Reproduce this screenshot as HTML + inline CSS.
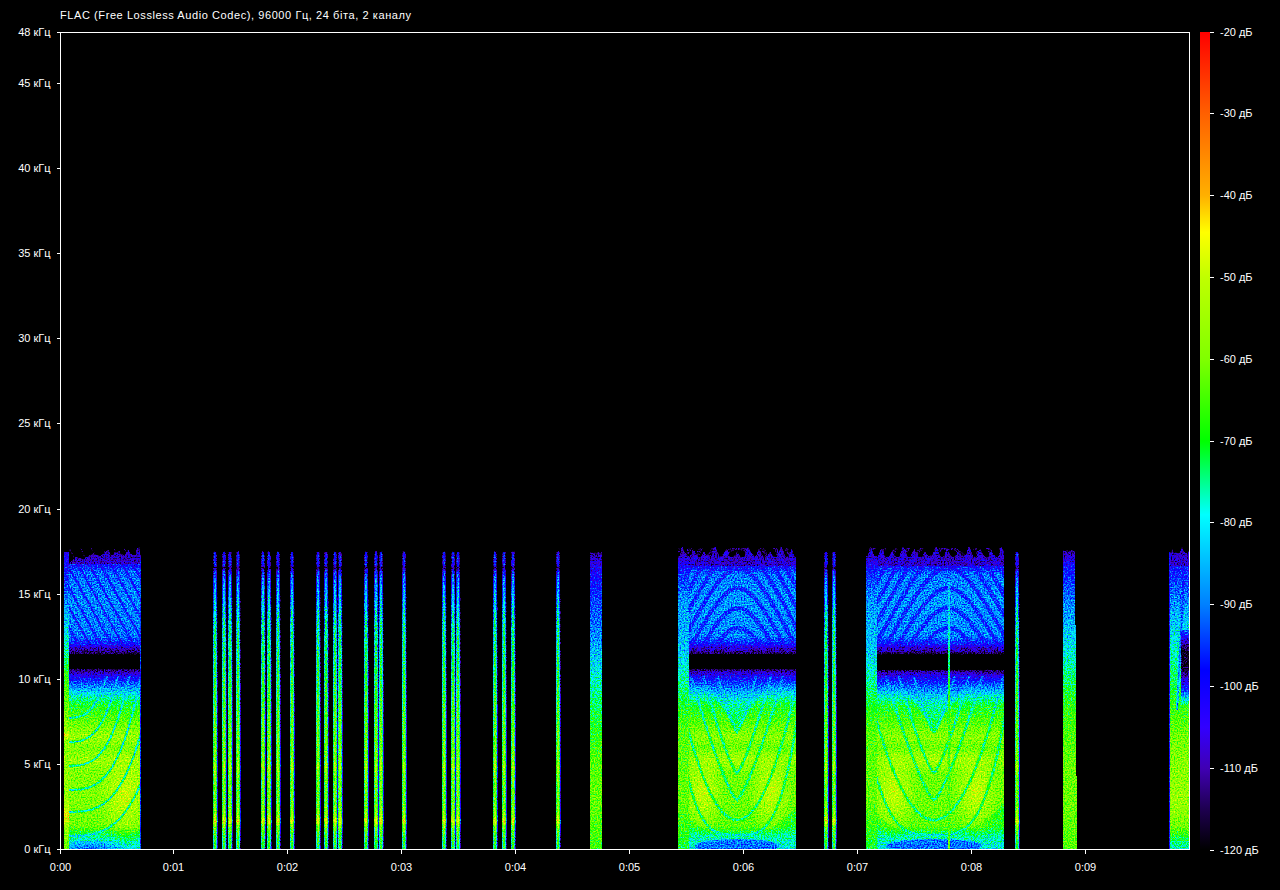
<!DOCTYPE html>
<html><head><meta charset="utf-8"><style>
html,body{margin:0;padding:0;background:#000;width:1280px;height:890px;overflow:hidden}
svg{display:block}
</style></head><body>
<svg width="1280" height="890" viewBox="0 0 1280 890" shape-rendering="crispEdges">
<defs><filter id="spec" filterUnits="userSpaceOnUse" x="61" y="520" width="1128" height="329" color-interpolation-filters="sRGB">
<feTurbulence type="fractalNoise" baseFrequency="0.7" numOctaves="1" seed="5" result="n"/>
<feColorMatrix in="n" type="matrix" values="2 0 0 0 -0.5  2 0 0 0 -0.5  2 0 0 0 -0.5  0 0 0 0 1" result="n2"/>
<feComposite in="SourceGraphic" in2="n2" operator="arithmetic" k1="0" k2="1" k3="0.200" k4="-0.100" result="m"/>
<feComponentTransfer in="m"><feFuncR type="table" tableValues="0.000 0.000 0.000 0.000 0.000 0.000 0.000 0.000 0.000 0.000 0.000 0.000 0.000 0.000 0.000 0.000 0.000 0.000 0.000 0.000 0.000 0.000 0.000 0.000 0.000 0.000 0.000 0.000 0.000 0.000 0.000 0.000 0.000 0.000 0.000 0.000 0.004 0.016 0.024 0.035 0.047 0.059 0.067 0.078 0.090 0.098 0.110 0.122 0.133 0.145 0.157 0.169 0.184 0.196 0.208 0.220 0.231 0.243 0.251 0.243 0.239 0.235 0.227 0.224 0.220 0.216 0.208 0.204 0.200 0.192 0.176 0.165 0.153 0.141 0.125 0.114 0.102 0.090 0.075 0.063 0.051 0.039 0.024 0.012 0.000 0.000 0.000 0.000 0.000 0.000 0.000 0.000 0.000 0.000 0.000 0.000 0.000 0.000 0.000 0.000 0.000 0.000 0.000 0.000 0.000 0.000 0.000 0.000 0.000 0.000 0.000 0.000 0.000 0.000 0.000 0.000 0.000 0.000 0.000 0.000 0.000 0.000 0.000 0.000 0.000 0.000 0.000 0.000 0.000 0.000 0.000 0.000 0.000 0.000 0.000 0.000 0.000 0.000 0.000 0.000 0.000 0.000 0.000 0.000 0.000 0.000 0.016 0.039 0.059 0.082 0.106 0.129 0.153 0.176 0.196 0.220 0.243 0.267 0.290 0.314 0.337 0.357 0.380 0.404 0.427 0.451 0.475 0.494 0.510 0.522 0.533 0.545 0.557 0.569 0.580 0.592 0.600 0.612 0.624 0.635 0.647 0.659 0.671 0.682 0.694 0.706 0.718 0.729 0.737 0.749 0.769 0.788 0.812 0.831 0.851 0.871 0.890 0.914 0.933 0.953 0.973 0.996 1.000 1.000 1.000 1.000 1.000 1.000 1.000 1.000 1.000 1.000 1.000 1.000 1.000 1.000 1.000 1.000 1.000 1.000 1.000 1.000 1.000 1.000 1.000 1.000 1.000 1.000 1.000 1.000 1.000 1.000 1.000 1.000 1.000 1.000 1.000 1.000 1.000 1.000 1.000 1.000 1.000 1.000 1.000 1.000 1.000 1.000 1.000 1.000 1.000 1.000 1.000 1.000 1.000 1.000"/><feFuncG type="table" tableValues="0.000 0.000 0.000 0.000 0.000 0.000 0.000 0.000 0.000 0.000 0.000 0.000 0.000 0.000 0.000 0.000 0.000 0.000 0.000 0.000 0.000 0.000 0.000 0.000 0.000 0.000 0.000 0.000 0.000 0.000 0.000 0.000 0.000 0.000 0.000 0.000 0.000 0.000 0.000 0.000 0.000 0.000 0.000 0.000 0.000 0.000 0.000 0.000 0.000 0.000 0.000 0.000 0.000 0.000 0.000 0.000 0.000 0.000 0.000 0.000 0.000 0.000 0.000 0.000 0.000 0.000 0.000 0.000 0.000 0.000 0.000 0.000 0.000 0.000 0.000 0.000 0.000 0.000 0.000 0.000 0.000 0.000 0.000 0.000 0.000 0.031 0.059 0.086 0.118 0.145 0.173 0.200 0.231 0.259 0.286 0.318 0.345 0.373 0.404 0.431 0.459 0.486 0.514 0.533 0.553 0.573 0.596 0.616 0.635 0.659 0.678 0.698 0.718 0.741 0.761 0.780 0.800 0.824 0.843 0.863 0.882 0.906 0.925 0.945 0.969 0.988 1.000 1.000 1.000 1.000 1.000 1.000 1.000 1.000 1.000 1.000 1.000 1.000 1.000 1.000 1.000 1.000 1.000 1.000 1.000 1.000 1.000 1.000 1.000 1.000 1.000 1.000 1.000 1.000 1.000 1.000 1.000 1.000 1.000 1.000 1.000 1.000 1.000 1.000 1.000 1.000 1.000 1.000 1.000 1.000 1.000 1.000 1.000 1.000 1.000 1.000 1.000 1.000 1.000 1.000 1.000 1.000 1.000 1.000 1.000 1.000 1.000 1.000 1.000 1.000 1.000 1.000 1.000 1.000 1.000 1.000 1.000 1.000 1.000 1.000 1.000 1.000 0.976 0.945 0.914 0.882 0.851 0.820 0.788 0.757 0.725 0.694 0.678 0.663 0.651 0.635 0.620 0.608 0.592 0.576 0.565 0.549 0.533 0.522 0.506 0.490 0.478 0.463 0.447 0.435 0.420 0.408 0.392 0.376 0.361 0.345 0.325 0.310 0.290 0.275 0.259 0.239 0.224 0.208 0.188 0.173 0.153 0.137 0.122 0.102 0.086 0.071 0.051 0.035 0.016 0.000"/><feFuncB type="table" tableValues="0.000 0.000 0.000 0.000 0.000 0.000 0.000 0.000 0.000 0.000 0.000 0.000 0.000 0.000 0.000 0.000 0.000 0.000 0.000 0.000 0.000 0.000 0.000 0.000 0.000 0.000 0.000 0.000 0.000 0.000 0.000 0.000 0.000 0.000 0.000 0.000 0.008 0.035 0.067 0.094 0.122 0.153 0.180 0.208 0.239 0.267 0.294 0.325 0.361 0.396 0.431 0.471 0.506 0.541 0.576 0.612 0.647 0.682 0.718 0.741 0.769 0.796 0.824 0.851 0.878 0.902 0.929 0.957 0.984 1.000 1.000 1.000 1.000 1.000 1.000 1.000 1.000 1.000 1.000 1.000 1.000 1.000 1.000 1.000 1.000 1.000 1.000 1.000 1.000 1.000 1.000 1.000 1.000 1.000 1.000 1.000 1.000 1.000 1.000 1.000 1.000 1.000 1.000 1.000 1.000 1.000 1.000 1.000 1.000 1.000 1.000 1.000 1.000 1.000 1.000 1.000 1.000 1.000 1.000 1.000 1.000 1.000 1.000 1.000 1.000 1.000 0.980 0.929 0.878 0.827 0.776 0.725 0.675 0.627 0.576 0.525 0.475 0.424 0.373 0.322 0.271 0.220 0.169 0.118 0.067 0.020 0.000 0.000 0.000 0.000 0.000 0.000 0.000 0.000 0.000 0.000 0.000 0.000 0.000 0.000 0.000 0.000 0.000 0.000 0.000 0.000 0.000 0.000 0.000 0.000 0.000 0.000 0.000 0.000 0.000 0.000 0.000 0.000 0.000 0.000 0.000 0.000 0.000 0.000 0.000 0.000 0.000 0.000 0.000 0.000 0.000 0.000 0.000 0.000 0.000 0.000 0.000 0.000 0.000 0.000 0.000 0.000 0.000 0.000 0.000 0.000 0.000 0.000 0.000 0.000 0.000 0.000 0.000 0.000 0.000 0.000 0.000 0.000 0.000 0.000 0.000 0.000 0.000 0.000 0.000 0.000 0.000 0.000 0.000 0.000 0.000 0.000 0.000 0.000 0.000 0.000 0.000 0.000 0.000 0.000 0.000 0.000 0.000 0.000 0.000 0.000 0.000 0.000 0.000 0.000 0.000 0.000 0.000 0.000 0.000 0.000"/><feFuncA type="linear" slope="0" intercept="1"/></feComponentTransfer>
</filter>
<linearGradient id="g1" gradientUnits="userSpaceOnUse" x1="0" y1="549" x2="0" y2="849"><stop offset="0.0000" stop-color="#000000"/><stop offset="0.0067" stop-color="#000000"/><stop offset="0.0100" stop-color="#474747"/><stop offset="0.0233" stop-color="#545454"/><stop offset="0.0533" stop-color="#545454"/><stop offset="0.0633" stop-color="#313131"/><stop offset="0.0733" stop-color="#585858"/><stop offset="0.1033" stop-color="#6a6a6a"/><stop offset="0.1700" stop-color="#777777"/><stop offset="0.2533" stop-color="#898989"/><stop offset="0.3700" stop-color="#919191"/><stop offset="0.4700" stop-color="#9a9a9a"/><stop offset="0.5700" stop-color="#a3a3a3"/><stop offset="0.7033" stop-color="#acacac"/><stop offset="0.7267" stop-color="#b9b9b9"/><stop offset="0.7500" stop-color="#acacac"/><stop offset="0.8367" stop-color="#a7a7a7"/><stop offset="0.8900" stop-color="#b4b4b4"/><stop offset="0.9067" stop-color="#cacaca"/><stop offset="0.9233" stop-color="#b0b0b0"/><stop offset="0.9533" stop-color="#9f9f9f"/><stop offset="1.0000" stop-color="#969696"/></linearGradient>
<linearGradient id="g2" gradientUnits="userSpaceOnUse" x1="0" y1="549" x2="0" y2="849"><stop offset="0.0000" stop-color="#000000"/><stop offset="0.0067" stop-color="#000000"/><stop offset="0.0100" stop-color="#282828"/><stop offset="0.0233" stop-color="#353535"/><stop offset="0.0533" stop-color="#353535"/><stop offset="0.0633" stop-color="#242424"/><stop offset="0.0733" stop-color="#3a3a3a"/><stop offset="0.1033" stop-color="#4b4b4b"/><stop offset="0.1700" stop-color="#585858"/><stop offset="0.2533" stop-color="#6a6a6a"/><stop offset="0.3700" stop-color="#737373"/><stop offset="0.4700" stop-color="#7b7b7b"/><stop offset="0.5700" stop-color="#848484"/><stop offset="0.7033" stop-color="#8d8d8d"/><stop offset="0.7267" stop-color="#9a9a9a"/><stop offset="0.7500" stop-color="#8d8d8d"/><stop offset="0.8367" stop-color="#898989"/><stop offset="0.8900" stop-color="#969696"/><stop offset="0.9067" stop-color="#acacac"/><stop offset="0.9233" stop-color="#919191"/><stop offset="0.9533" stop-color="#808080"/><stop offset="1.0000" stop-color="#777777"/></linearGradient>
<linearGradient id="g3" gradientUnits="userSpaceOnUse" x1="0" y1="549" x2="0" y2="849"><stop offset="0.0000" stop-color="#000000"/><stop offset="0.0067" stop-color="#000000"/><stop offset="0.0100" stop-color="#000000"/><stop offset="0.0233" stop-color="#000000"/><stop offset="0.0533" stop-color="#000000"/><stop offset="0.0633" stop-color="#000000"/><stop offset="0.0733" stop-color="#000000"/><stop offset="0.1033" stop-color="#000000"/><stop offset="0.1700" stop-color="#242424"/><stop offset="0.2533" stop-color="#242424"/><stop offset="0.3700" stop-color="#2c2c2c"/><stop offset="0.4700" stop-color="#353535"/><stop offset="0.5700" stop-color="#3e3e3e"/><stop offset="0.7033" stop-color="#474747"/><stop offset="0.7267" stop-color="#545454"/><stop offset="0.7500" stop-color="#474747"/><stop offset="0.8367" stop-color="#424242"/><stop offset="0.8900" stop-color="#505050"/><stop offset="0.9067" stop-color="#656565"/><stop offset="0.9233" stop-color="#4b4b4b"/><stop offset="0.9533" stop-color="#3a3a3a"/><stop offset="1.0000" stop-color="#313131"/></linearGradient>
<linearGradient id="g4" gradientUnits="userSpaceOnUse" x1="0" y1="554" x2="0" y2="849"><stop offset="0.0000" stop-color="#000000"/><stop offset="0.0034" stop-color="#3a3a3a"/><stop offset="0.0271" stop-color="#4b4b4b"/><stop offset="0.0610" stop-color="#636363"/><stop offset="0.1559" stop-color="#686868"/><stop offset="0.2780" stop-color="#656565"/><stop offset="0.3051" stop-color="#545454"/><stop offset="0.3186" stop-color="#3c3c3c"/><stop offset="0.3390" stop-color="#2c2c2c"/><stop offset="0.3424" stop-color="#000000"/><stop offset="0.3864" stop-color="#000000"/><stop offset="0.3898" stop-color="#2c2c2c"/><stop offset="0.4068" stop-color="#424242"/><stop offset="0.4407" stop-color="#616161"/><stop offset="0.4746" stop-color="#7b7b7b"/><stop offset="0.5085" stop-color="#919191"/><stop offset="0.5695" stop-color="#a3a3a3"/><stop offset="0.6203" stop-color="#b0b0b0"/><stop offset="0.6576" stop-color="#a7a7a7"/><stop offset="0.6983" stop-color="#b0b0b0"/><stop offset="0.7390" stop-color="#a9a9a9"/><stop offset="0.8339" stop-color="#a9a9a9"/><stop offset="0.9220" stop-color="#a5a5a5"/><stop offset="0.9559" stop-color="#898989"/><stop offset="1.0000" stop-color="#7b7b7b"/></linearGradient>
<clipPath id="c1"><rect x="69" y="676" width="72" height="173"/></clipPath>
<radialGradient id="rg5"><stop offset="0" stop-color="#c2c2c2" stop-opacity="0.8"/><stop offset="1" stop-color="#c2c2c2" stop-opacity="0"/></radialGradient>
<clipPath id="c2"><rect x="69" y="548" width="72" height="102"/></clipPath>
<clipPath id="c3"><rect x="69" y="676" width="72" height="173"/></clipPath>
<radialGradient id="rg6"><stop offset="0" stop-color="#545454" stop-opacity="0.7"/><stop offset="1" stop-color="#545454" stop-opacity="0"/></radialGradient>
<linearGradient id="g7" gradientUnits="userSpaceOnUse" x1="0" y1="556" x2="0" y2="849"><stop offset="0.0000" stop-color="#000000"/><stop offset="0.0034" stop-color="#3a3a3a"/><stop offset="0.0273" stop-color="#4b4b4b"/><stop offset="0.0614" stop-color="#656565"/><stop offset="0.1502" stop-color="#6a6a6a"/><stop offset="0.2730" stop-color="#686868"/><stop offset="0.3003" stop-color="#545454"/><stop offset="0.3140" stop-color="#3c3c3c"/><stop offset="0.3345" stop-color="#2c2c2c"/><stop offset="0.3379" stop-color="#000000"/><stop offset="0.3823" stop-color="#000000"/><stop offset="0.3857" stop-color="#2c2c2c"/><stop offset="0.4027" stop-color="#424242"/><stop offset="0.4369" stop-color="#616161"/><stop offset="0.4710" stop-color="#7b7b7b"/><stop offset="0.5051" stop-color="#919191"/><stop offset="0.5666" stop-color="#9f9f9f"/><stop offset="0.6177" stop-color="#acacac"/><stop offset="0.6553" stop-color="#a3a3a3"/><stop offset="0.6962" stop-color="#acacac"/><stop offset="0.7372" stop-color="#a5a5a5"/><stop offset="0.8328" stop-color="#a5a5a5"/><stop offset="0.9215" stop-color="#a1a1a1"/><stop offset="0.9556" stop-color="#898989"/><stop offset="1.0000" stop-color="#7b7b7b"/></linearGradient>
<clipPath id="c4"><rect x="678" y="548" width="118" height="104"/></clipPath>
<clipPath id="c5"><rect x="678" y="676" width="118" height="173"/></clipPath>
<radialGradient id="rg8"><stop offset="0" stop-color="#c2c2c2" stop-opacity="0.8"/><stop offset="1" stop-color="#c2c2c2" stop-opacity="0"/></radialGradient>
<radialGradient id="rg9"><stop offset="0" stop-color="#c2c2c2" stop-opacity="0.8"/><stop offset="1" stop-color="#c2c2c2" stop-opacity="0"/></radialGradient>
<radialGradient id="rg10"><stop offset="0" stop-color="#b9b9b9" stop-opacity="0.6"/><stop offset="1" stop-color="#b9b9b9" stop-opacity="0"/></radialGradient>
<linearGradient id="g11" gradientUnits="userSpaceOnUse" x1="0" y1="556" x2="0" y2="849"><stop offset="0.0000" stop-color="#000000"/><stop offset="0.0034" stop-color="#3a3a3a"/><stop offset="0.0273" stop-color="#4b4b4b"/><stop offset="0.0614" stop-color="#656565"/><stop offset="0.1502" stop-color="#6a6a6a"/><stop offset="0.2730" stop-color="#686868"/><stop offset="0.3003" stop-color="#545454"/><stop offset="0.3140" stop-color="#3c3c3c"/><stop offset="0.3345" stop-color="#2c2c2c"/><stop offset="0.3379" stop-color="#000000"/><stop offset="0.3857" stop-color="#000000"/><stop offset="0.3891" stop-color="#2c2c2c"/><stop offset="0.4061" stop-color="#424242"/><stop offset="0.4403" stop-color="#616161"/><stop offset="0.4744" stop-color="#7b7b7b"/><stop offset="0.5085" stop-color="#919191"/><stop offset="0.5666" stop-color="#9f9f9f"/><stop offset="0.6177" stop-color="#acacac"/><stop offset="0.6553" stop-color="#a3a3a3"/><stop offset="0.6962" stop-color="#acacac"/><stop offset="0.7372" stop-color="#a5a5a5"/><stop offset="0.8328" stop-color="#a5a5a5"/><stop offset="0.9215" stop-color="#a1a1a1"/><stop offset="0.9556" stop-color="#898989"/><stop offset="1.0000" stop-color="#7b7b7b"/></linearGradient>
<clipPath id="c6"><rect x="866" y="548" width="138" height="104"/></clipPath>
<clipPath id="c7"><rect x="866" y="676" width="138" height="173"/></clipPath>
<radialGradient id="rg12"><stop offset="0" stop-color="#c2c2c2" stop-opacity="0.8"/><stop offset="1" stop-color="#c2c2c2" stop-opacity="0"/></radialGradient>
<radialGradient id="rg13"><stop offset="0" stop-color="#c2c2c2" stop-opacity="0.8"/><stop offset="1" stop-color="#c2c2c2" stop-opacity="0"/></radialGradient>
<radialGradient id="rg14"><stop offset="0" stop-color="#b9b9b9" stop-opacity="0.6"/><stop offset="1" stop-color="#b9b9b9" stop-opacity="0"/></radialGradient>
<linearGradient id="g15" gradientUnits="userSpaceOnUse" x1="0" y1="552" x2="0" y2="849"><stop offset="0.0000" stop-color="#000000"/><stop offset="0.0034" stop-color="#3e3e3e"/><stop offset="0.0438" stop-color="#505050"/><stop offset="0.1279" stop-color="#616161"/><stop offset="0.2290" stop-color="#737373"/><stop offset="0.3636" stop-color="#848484"/><stop offset="0.4983" stop-color="#969696"/><stop offset="0.6330" stop-color="#a7a7a7"/><stop offset="0.8350" stop-color="#b0b0b0"/><stop offset="0.9226" stop-color="#a7a7a7"/><stop offset="0.9697" stop-color="#8d8d8d"/><stop offset="1.0000" stop-color="#808080"/></linearGradient>
<linearGradient id="g16" gradientUnits="userSpaceOnUse" x1="0" y1="625" x2="0" y2="705"><stop offset="0.0000" stop-color="#6e6e6e"/><stop offset="0.1375" stop-color="#505050"/><stop offset="0.2500" stop-color="#353535"/><stop offset="0.3375" stop-color="#262626"/><stop offset="0.5375" stop-color="#262626"/><stop offset="0.6375" stop-color="#3a3a3a"/><stop offset="0.8125" stop-color="#585858"/><stop offset="1.0000" stop-color="#8d8d8d"/></linearGradient>
<linearGradient id="g17" gradientUnits="userSpaceOnUse" x1="0" y1="551" x2="0" y2="849"><stop offset="0.0000" stop-color="#000000"/><stop offset="0.0067" stop-color="#353535"/><stop offset="0.0638" stop-color="#4b4b4b"/><stop offset="0.1644" stop-color="#5b5b5b"/><stop offset="0.2987" stop-color="#6a6a6a"/><stop offset="0.4329" stop-color="#808080"/><stop offset="0.5671" stop-color="#919191"/><stop offset="0.7013" stop-color="#9f9f9f"/><stop offset="0.8356" stop-color="#a3a3a3"/><stop offset="1.0000" stop-color="#9a9a9a"/></linearGradient>
<linearGradient id="g18" gradientUnits="userSpaceOnUse" x1="0" y1="549" x2="0" y2="849"><stop offset="0.0000" stop-color="#000000"/><stop offset="0.0067" stop-color="#353535"/><stop offset="0.0567" stop-color="#505050"/><stop offset="0.1700" stop-color="#656565"/><stop offset="0.3700" stop-color="#808080"/><stop offset="0.5033" stop-color="#969696"/><stop offset="0.7033" stop-color="#a3a3a3"/><stop offset="0.8367" stop-color="#a5a5a5"/><stop offset="1.0000" stop-color="#9f9f9f"/></linearGradient>
<linearGradient id="g19" gradientUnits="userSpaceOnUse" x1="0" y1="549" x2="0" y2="849"><stop offset="0.0000" stop-color="#000000"/><stop offset="0.0067" stop-color="#3e3e3e"/><stop offset="0.0700" stop-color="#545454"/><stop offset="0.1700" stop-color="#6a6a6a"/><stop offset="0.3367" stop-color="#7b7b7b"/><stop offset="0.4367" stop-color="#919191"/><stop offset="0.6033" stop-color="#a3a3a3"/><stop offset="0.8367" stop-color="#a7a7a7"/><stop offset="1.0000" stop-color="#9a9a9a"/></linearGradient>
<linearGradient id="g20" gradientUnits="userSpaceOnUse" x1="0" y1="551" x2="0" y2="849"><stop offset="0.0000" stop-color="#000000"/><stop offset="0.0034" stop-color="#474747"/><stop offset="0.0805" stop-color="#545454"/><stop offset="0.1980" stop-color="#6e6e6e"/><stop offset="0.3322" stop-color="#848484"/><stop offset="0.4329" stop-color="#9a9a9a"/><stop offset="0.6007" stop-color="#acacac"/><stop offset="0.6174" stop-color="#c6c6c6"/><stop offset="0.6342" stop-color="#acacac"/><stop offset="0.8356" stop-color="#b0b0b0"/><stop offset="0.8960" stop-color="#cacaca"/><stop offset="0.9161" stop-color="#b0b0b0"/><stop offset="1.0000" stop-color="#a3a3a3"/></linearGradient>
<linearGradient id="g21" gradientUnits="userSpaceOnUse" x1="0" y1="549" x2="0" y2="849"><stop offset="0.0000" stop-color="#000000"/><stop offset="0.0233" stop-color="#3e3e3e"/><stop offset="0.0867" stop-color="#585858"/><stop offset="0.1700" stop-color="#6a6a6a"/><stop offset="0.3367" stop-color="#737373"/><stop offset="0.4367" stop-color="#848484"/><stop offset="0.6033" stop-color="#9f9f9f"/><stop offset="0.8367" stop-color="#a3a3a3"/><stop offset="1.0000" stop-color="#919191"/></linearGradient>
<linearGradient id="g22" gradientUnits="userSpaceOnUse" x1="0" y1="577" x2="0" y2="849"><stop offset="0.0000" stop-color="#000000"/><stop offset="0.0037" stop-color="#6e6e6e"/><stop offset="0.0846" stop-color="#777777"/><stop offset="0.2684" stop-color="#848484"/><stop offset="0.4522" stop-color="#969696"/><stop offset="1.0000" stop-color="#9f9f9f"/></linearGradient>
<linearGradient id="cbar" x1="0" y1="0" x2="0" y2="1"><stop offset="0.0000" stop-color="#ff0000"/><stop offset="0.1000" stop-color="#ff6000"/><stop offset="0.2000" stop-color="#ffb000"/><stop offset="0.2450" stop-color="#ffff00"/><stop offset="0.3000" stop-color="#c0ff00"/><stop offset="0.4000" stop-color="#80ff00"/><stop offset="0.5000" stop-color="#00ff00"/><stop offset="0.5900" stop-color="#00ffff"/><stop offset="0.7000" stop-color="#0080ff"/><stop offset="0.7800" stop-color="#0000ff"/><stop offset="0.8500" stop-color="#3200ff"/><stop offset="0.9000" stop-color="#4000b4"/><stop offset="0.9500" stop-color="#1e0050"/><stop offset="1.0000" stop-color="#000000"/></linearGradient></defs>
<rect width="1280" height="890" fill="#000"/>
<g filter="url(#spec)"><rect x="61" y="520" width="1128" height="329" fill="#000"/>
<rect x="213" y="549" width="4" height="300" fill="url(#g2)"/>
<rect x="214" y="549" width="2" height="300" fill="url(#g1)"/>
<rect x="217" y="549" width="1" height="300" fill="url(#g3)"/>
<rect x="222" y="549" width="4" height="300" fill="url(#g2)"/>
<rect x="223" y="549" width="2" height="300" fill="url(#g1)"/>
<rect x="226" y="549" width="1" height="300" fill="url(#g3)"/>
<rect x="228" y="549" width="4" height="300" fill="url(#g2)"/>
<rect x="229" y="549" width="2" height="300" fill="url(#g1)"/>
<rect x="232" y="549" width="1" height="300" fill="url(#g3)"/>
<rect x="236" y="549" width="4" height="300" fill="url(#g2)"/>
<rect x="237" y="549" width="2" height="300" fill="url(#g1)"/>
<rect x="240" y="549" width="1" height="300" fill="url(#g3)"/>
<rect x="261" y="549" width="4" height="300" fill="url(#g2)"/>
<rect x="262" y="549" width="2" height="300" fill="url(#g1)"/>
<rect x="265" y="549" width="1" height="300" fill="url(#g3)"/>
<rect x="267" y="549" width="4" height="300" fill="url(#g2)"/>
<rect x="268" y="549" width="2" height="300" fill="url(#g1)"/>
<rect x="271" y="549" width="1" height="300" fill="url(#g3)"/>
<rect x="276" y="549" width="4" height="300" fill="url(#g2)"/>
<rect x="277" y="549" width="2" height="300" fill="url(#g1)"/>
<rect x="280" y="549" width="1" height="300" fill="url(#g3)"/>
<rect x="290" y="549" width="4" height="300" fill="url(#g2)"/>
<rect x="291" y="549" width="2" height="300" fill="url(#g1)"/>
<rect x="294" y="549" width="1" height="300" fill="url(#g3)"/>
<rect x="316" y="549" width="4" height="300" fill="url(#g2)"/>
<rect x="317" y="549" width="2" height="300" fill="url(#g1)"/>
<rect x="320" y="549" width="1" height="300" fill="url(#g3)"/>
<rect x="324" y="549" width="4" height="300" fill="url(#g2)"/>
<rect x="325" y="549" width="2" height="300" fill="url(#g1)"/>
<rect x="328" y="549" width="1" height="300" fill="url(#g3)"/>
<rect x="333" y="549" width="4" height="300" fill="url(#g2)"/>
<rect x="334" y="549" width="2" height="300" fill="url(#g1)"/>
<rect x="337" y="549" width="1" height="300" fill="url(#g3)"/>
<rect x="338" y="549" width="4" height="300" fill="url(#g2)"/>
<rect x="339" y="549" width="2" height="300" fill="url(#g1)"/>
<rect x="342" y="549" width="1" height="300" fill="url(#g3)"/>
<rect x="364" y="549" width="4" height="300" fill="url(#g2)"/>
<rect x="365" y="549" width="2" height="300" fill="url(#g1)"/>
<rect x="368" y="549" width="1" height="300" fill="url(#g3)"/>
<rect x="374" y="549" width="4" height="300" fill="url(#g2)"/>
<rect x="375" y="549" width="2" height="300" fill="url(#g1)"/>
<rect x="378" y="549" width="1" height="300" fill="url(#g3)"/>
<rect x="379" y="549" width="4" height="300" fill="url(#g2)"/>
<rect x="380" y="549" width="2" height="300" fill="url(#g1)"/>
<rect x="383" y="549" width="1" height="300" fill="url(#g3)"/>
<rect x="402" y="549" width="4" height="300" fill="url(#g2)"/>
<rect x="403" y="549" width="2" height="300" fill="url(#g1)"/>
<rect x="406" y="549" width="1" height="300" fill="url(#g3)"/>
<rect x="442" y="549" width="4" height="300" fill="url(#g2)"/>
<rect x="443" y="549" width="2" height="300" fill="url(#g1)"/>
<rect x="446" y="549" width="1" height="300" fill="url(#g3)"/>
<rect x="451" y="549" width="4" height="300" fill="url(#g2)"/>
<rect x="452" y="549" width="2" height="300" fill="url(#g1)"/>
<rect x="455" y="549" width="1" height="300" fill="url(#g3)"/>
<rect x="456" y="549" width="4" height="300" fill="url(#g2)"/>
<rect x="457" y="549" width="2" height="300" fill="url(#g1)"/>
<rect x="460" y="549" width="1" height="300" fill="url(#g3)"/>
<rect x="493" y="549" width="4" height="300" fill="url(#g2)"/>
<rect x="494" y="549" width="2" height="300" fill="url(#g1)"/>
<rect x="497" y="549" width="1" height="300" fill="url(#g3)"/>
<rect x="502" y="549" width="4" height="300" fill="url(#g2)"/>
<rect x="503" y="549" width="2" height="300" fill="url(#g1)"/>
<rect x="506" y="549" width="1" height="300" fill="url(#g3)"/>
<rect x="511" y="549" width="4" height="300" fill="url(#g2)"/>
<rect x="512" y="549" width="2" height="300" fill="url(#g1)"/>
<rect x="515" y="549" width="1" height="300" fill="url(#g3)"/>
<rect x="556" y="549" width="4" height="300" fill="url(#g2)"/>
<rect x="557" y="549" width="2" height="300" fill="url(#g1)"/>
<rect x="560" y="549" width="1" height="300" fill="url(#g3)"/>
<rect x="824" y="549" width="4" height="300" fill="url(#g2)"/>
<rect x="825" y="549" width="2" height="300" fill="url(#g1)"/>
<rect x="828" y="549" width="1" height="300" fill="url(#g3)"/>
<rect x="832" y="549" width="4" height="300" fill="url(#g2)"/>
<rect x="833" y="549" width="2" height="300" fill="url(#g1)"/>
<rect x="836" y="549" width="1" height="300" fill="url(#g3)"/>
<rect x="1015" y="549" width="4" height="300" fill="url(#g2)"/>
<rect x="1016" y="549" width="2" height="300" fill="url(#g1)"/>
<rect x="1019" y="549" width="1" height="300" fill="url(#g3)"/>
<rect x="69" y="554" width="72" height="295" fill="url(#g4)"/>
<path d="M69.0 564.0 L73.0 543.0 L79.0 558.0 L84.0 546.0 L90.0 558.0 L95.0 549.0 L101.0 558.0 L106.0 543.0 L112.0 558.0 L117.0 546.0 L123.0 558.0 L128.0 549.0 L134.0 558.0 L139.0 543.0 L141.0 558.0 L141.0 564.0 Z" fill="#3c3c3c" shape-rendering="auto"/>
<path d="M69 540 L141 540 L141 546 L130 551 L124 547 L116 553 L108 550 L100 556 L92 553 L84 559 L76 557 L69 563 Z" fill="#000" shape-rendering="auto"/>
<g clip-path="url(#c1)">
<ellipse cx="125" cy="795" rx="26" ry="50" fill="url(#rg5)" shape-rendering="auto"/>
</g>
<g clip-path="url(#c2)" fill="none" stroke="#424242" stroke-width="2" stroke-opacity="0.6" shape-rendering="auto">
<path d="M3.0 548.0 L63.0 656.0"/>
<path d="M14.0 548.0 L74.0 656.0"/>
<path d="M25.0 548.0 L85.0 656.0"/>
<path d="M36.0 548.0 L96.0 656.0"/>
<path d="M47.0 548.0 L107.0 656.0"/>
<path d="M58.0 548.0 L118.0 656.0"/>
<path d="M69.0 548.0 L129.0 656.0"/>
<path d="M80.0 548.0 L140.0 656.0"/>
<path d="M91.0 548.0 L151.0 656.0"/>
<path d="M102.0 548.0 L162.0 656.0"/>
<path d="M113.0 548.0 L173.0 656.0"/>
<path d="M124.0 548.0 L184.0 656.0"/>
<path d="M135.0 548.0 L195.0 656.0"/>
<path d="M146.0 548.0 L206.0 656.0"/>
<path d="M157.0 548.0 L217.0 656.0"/>
<path d="M168.0 548.0 L228.0 656.0"/>
</g>
<g clip-path="url(#c1)">
<ellipse cx="90" cy="849" rx="40" ry="12" fill="url(#rg6)" shape-rendering="auto"/>
</g>
<g clip-path="url(#c3)" fill="none" stroke="#737373" stroke-width="2" stroke-opacity="0.8" shape-rendering="auto">
<path d="M67.0 836.0 L68.0 836.0 L69.0 836.0 L70.0 836.0 L71.0 836.0 L72.0 836.0 L73.0 835.9 L74.0 835.9 L75.0 835.9 L76.0 835.9 L77.0 835.8 L78.0 835.8 L79.0 835.8 L80.0 835.7 L81.0 835.6 L82.0 835.6 L83.0 835.5 L84.0 835.4 L85.0 835.3 L86.0 835.2 L87.0 835.1 L88.0 834.9 L89.0 834.8 L90.0 834.6 L91.0 834.4 L92.0 834.2 L93.0 834.0 L94.0 833.8 L95.0 833.5 L96.0 833.2 L97.0 833.0 L98.0 832.6 L99.0 832.3 L100.0 831.9 L101.0 831.6 L102.0 831.1 L103.0 830.7 L104.0 830.2 L105.0 829.7 L106.0 829.2 L107.0 828.7 L108.0 828.1 L109.0 827.5 L110.0 826.8 L111.0 826.1 L112.0 825.4 L113.0 824.6 L114.0 823.8 L115.0 823.0 L116.0 822.1 L117.0 821.2 L118.0 820.2 L119.0 819.2 L120.0 818.2 L121.0 817.1 L122.0 815.9 L123.0 814.7 L124.0 813.5 L125.0 812.2 L126.0 810.8 L127.0 809.4 L128.0 808.0 L129.0 806.5 L130.0 804.9 L131.0 803.3 L132.0 801.6 L133.0 799.8 L134.0 798.0 L135.0 796.1 L136.0 794.2 L137.0 792.2 L138.0 790.1 L139.0 787.9 L140.0 785.7 L141.0 783.4 L142.0 781.0 L143.0 778.6"/>
<path d="M67.0 812.0 L68.0 812.0 L69.0 812.0 L70.0 812.0 L71.0 812.0 L72.0 811.9 L73.0 811.9 L74.0 811.9 L75.0 811.9 L76.0 811.8 L77.0 811.8 L78.0 811.7 L79.0 811.6 L80.0 811.6 L81.0 811.5 L82.0 811.4 L83.0 811.2 L84.0 811.1 L85.0 810.9 L86.0 810.8 L87.0 810.6 L88.0 810.4 L89.0 810.2 L90.0 809.9 L91.0 809.6 L92.0 809.3 L93.0 809.0 L94.0 808.7 L95.0 808.3 L96.0 807.9 L97.0 807.4 L98.0 807.0 L99.0 806.5 L100.0 805.9 L101.0 805.3 L102.0 804.7 L103.0 804.1 L104.0 803.4 L105.0 802.6 L106.0 801.8 L107.0 801.0 L108.0 800.1 L109.0 799.2 L110.0 798.2 L111.0 797.2 L112.0 796.1 L113.0 794.9 L114.0 793.7 L115.0 792.5 L116.0 791.2 L117.0 789.8 L118.0 788.3 L119.0 786.8 L120.0 785.3 L121.0 783.6 L122.0 781.9 L123.0 780.1 L124.0 778.2 L125.0 776.3 L126.0 774.3 L127.0 772.1 L128.0 770.0 L129.0 767.7 L130.0 765.3 L131.0 762.9 L132.0 760.3 L133.0 757.7 L134.0 755.0 L135.0 752.2 L136.0 749.3 L137.0 746.2 L138.0 743.1 L139.0 739.9 L140.0 736.6 L141.0 733.1 L142.0 729.6 L143.0 725.9"/>
<path d="M67.0 790.0 L68.0 790.0 L69.0 790.0 L70.0 790.0 L71.0 789.9 L72.0 789.9 L73.0 789.9 L74.0 789.8 L75.0 789.8 L76.0 789.7 L77.0 789.7 L78.0 789.6 L79.0 789.5 L80.0 789.4 L81.0 789.2 L82.0 789.1 L83.0 788.9 L84.0 788.7 L85.0 788.5 L86.0 788.2 L87.0 788.0 L88.0 787.7 L89.0 787.3 L90.0 787.0 L91.0 786.6 L92.0 786.2 L93.0 785.7 L94.0 785.2 L95.0 784.6 L96.0 784.0 L97.0 783.4 L98.0 782.7 L99.0 782.0 L100.0 781.2 L101.0 780.4 L102.0 779.5 L103.0 778.5 L104.0 777.5 L105.0 776.4 L106.0 775.3 L107.0 774.1 L108.0 772.8 L109.0 771.5 L110.0 770.1 L111.0 768.6 L112.0 767.0 L113.0 765.4 L114.0 763.6 L115.0 761.8 L116.0 759.9 L117.0 757.9 L118.0 755.8 L119.0 753.6 L120.0 751.4 L121.0 749.0 L122.0 746.5 L123.0 743.9 L124.0 741.2 L125.0 738.4 L126.0 735.5 L127.0 732.4 L128.0 729.3 L129.0 726.0 L130.0 722.6 L131.0 719.1 L132.0 715.4 L133.0 711.6 L134.0 707.7 L135.0 703.6 L136.0 699.4 L137.0 695.0 L138.0 690.5 L139.0 685.8 L140.0 681.0 L141.0 676.1 L142.0 670.9 L143.0 665.6"/>
<path d="M67.0 766.0 L68.0 766.0 L69.0 766.0 L70.0 765.9 L71.0 765.9 L72.0 765.9 L73.0 765.8 L74.0 765.8 L75.0 765.7 L76.0 765.6 L77.0 765.5 L78.0 765.4 L79.0 765.3 L80.0 765.1 L81.0 764.9 L82.0 764.7 L83.0 764.5 L84.0 764.2 L85.0 763.9 L86.0 763.6 L87.0 763.2 L88.0 762.8 L89.0 762.3 L90.0 761.8 L91.0 761.3 L92.0 760.7 L93.0 760.0 L94.0 759.3 L95.0 758.6 L96.0 757.7 L97.0 756.9 L98.0 755.9 L99.0 754.9 L100.0 753.8 L101.0 752.7 L102.0 751.4 L103.0 750.1 L104.0 748.7 L105.0 747.2 L106.0 745.7 L107.0 744.0 L108.0 742.2 L109.0 740.4 L110.0 738.4 L111.0 736.4 L112.0 734.2 L113.0 731.9 L114.0 729.5 L115.0 727.0 L116.0 724.3 L117.0 721.6 L118.0 718.7 L119.0 715.7 L120.0 712.5 L121.0 709.2 L122.0 705.8 L123.0 702.2 L124.0 698.4 L125.0 694.6 L126.0 690.5 L127.0 686.3 L128.0 681.9 L129.0 677.4 L130.0 672.7 L131.0 667.8 L132.0 662.7 L133.0 657.4 L134.0 652.0 L135.0 646.3 L136.0 640.5 L137.0 634.5 L138.0 628.2 L139.0 621.8 L140.0 615.1 L141.0 608.2 L142.0 601.1 L143.0 593.8"/>
<path d="M67.0 742.0 L68.0 742.0 L69.0 742.0 L70.0 741.9 L71.0 741.9 L72.0 741.8 L73.0 741.8 L74.0 741.7 L75.0 741.6 L76.0 741.5 L77.0 741.3 L78.0 741.2 L79.0 741.0 L80.0 740.8 L81.0 740.5 L82.0 740.2 L83.0 739.9 L84.0 739.5 L85.0 739.1 L86.0 738.6 L87.0 738.1 L88.0 737.5 L89.0 736.9 L90.0 736.2 L91.0 735.4 L92.0 734.6 L93.0 733.7 L94.0 732.7 L95.0 731.7 L96.0 730.5 L97.0 729.3 L98.0 728.0 L99.0 726.6 L100.0 725.1 L101.0 723.5 L102.0 721.8 L103.0 719.9 L104.0 718.0 L105.0 715.9 L106.0 713.7 L107.0 711.4 L108.0 709.0 L109.0 706.4 L110.0 703.7 L111.0 700.8 L112.0 697.8 L113.0 694.6 L114.0 691.3 L115.0 687.8 L116.0 684.1 L117.0 680.3 L118.0 676.3 L119.0 672.1 L120.0 667.7 L121.0 663.1 L122.0 658.3 L123.0 653.4 L124.0 648.2 L125.0 642.8 L126.0 637.1 L127.0 631.3 L128.0 625.2 L129.0 618.9 L130.0 612.4 L131.0 605.6 L132.0 598.5 L133.0 591.2 L134.0 583.6 L135.0 575.8 L136.0 567.7 L137.0 559.3 L138.0 550.7 L139.0 541.7 L140.0 532.4 L141.0 522.9 L142.0 513.0 L143.0 502.9"/>
<path d="M67.0 718.0 L68.0 718.0 L69.0 717.9 L70.0 717.9 L71.0 717.8 L72.0 717.8 L73.0 717.7 L74.0 717.6 L75.0 717.4 L76.0 717.3 L77.0 717.1 L78.0 716.9 L79.0 716.6 L80.0 716.3 L81.0 715.9 L82.0 715.5 L83.0 715.0 L84.0 714.5 L85.0 713.9 L86.0 713.3 L87.0 712.5 L88.0 711.7 L89.0 710.8 L90.0 709.9 L91.0 708.8 L92.0 707.6 L93.0 706.4 L94.0 705.0 L95.0 703.5 L96.0 702.0 L97.0 700.2 L98.0 698.4 L99.0 696.4 L100.0 694.3 L101.0 692.1 L102.0 689.7 L103.0 687.1 L104.0 684.4 L105.0 681.5 L106.0 678.4 L107.0 675.2 L108.0 671.8 L109.0 668.2 L110.0 664.4 L111.0 660.4 L112.0 656.1 L113.0 651.7 L114.0 647.0 L115.0 642.1 L116.0 637.0 L117.0 631.6 L118.0 626.0 L119.0 620.1 L120.0 614.0 L121.0 607.6 L122.0 600.9 L123.0 593.9 L124.0 586.6 L125.0 579.1 L126.0 571.2 L127.0 563.0 L128.0 554.5 L129.0 545.7 L130.0 536.5 L131.0 527.0 L132.0 517.1 L133.0 506.9 L134.0 496.3 L135.0 485.3 L136.0 474.0 L137.0 462.3 L138.0 450.1 L139.0 437.6 L140.0 424.6 L141.0 411.2 L142.0 397.4 L143.0 383.2"/>
</g>
<rect x="678" y="556" width="118" height="293" fill="url(#g7)"/>
<path d="M678.0 566.0 L682.0 545.0 L688.0 560.0 L693.0 548.0 L699.0 560.0 L704.0 551.0 L710.0 560.0 L715.0 545.0 L721.0 560.0 L726.0 548.0 L732.0 560.0 L737.0 551.0 L743.0 560.0 L748.0 545.0 L754.0 560.0 L759.0 548.0 L765.0 560.0 L770.0 551.0 L776.0 560.0 L781.0 545.0 L787.0 560.0 L792.0 548.0 L796.0 560.0 L796.0 566.0 Z" fill="#3c3c3c" shape-rendering="auto"/>
<g clip-path="url(#c4)" fill="none" stroke="#4b4b4b" stroke-width="4" stroke-opacity="0.6" shape-rendering="auto">
<path d="M676.0 534.6 L678.0 530.7 L680.0 526.9 L682.0 523.1 L684.0 519.3 L686.0 515.5 L688.0 511.7 L690.0 508.0 L692.0 504.4 L694.0 500.7 L696.0 497.1 L698.0 493.6 L700.0 490.1 L702.0 486.7 L704.0 483.3 L706.0 480.0 L708.0 476.8 L710.0 473.6 L712.0 470.6 L714.0 467.7 L716.0 464.9 L718.0 462.3 L720.0 459.8 L722.0 457.5 L724.0 455.4 L726.0 453.5 L728.0 451.9 L730.0 450.5 L732.0 449.4 L734.0 448.6 L736.0 448.2 L738.0 448.0 L740.0 448.2 L742.0 448.6 L744.0 449.4 L746.0 450.5 L748.0 451.9 L750.0 453.5 L752.0 455.4 L754.0 457.5 L756.0 459.8 L758.0 462.3 L760.0 464.9 L762.0 467.7 L764.0 470.6 L766.0 473.6 L768.0 476.8 L770.0 480.0 L772.0 483.3 L774.0 486.7 L776.0 490.1 L778.0 493.6 L780.0 497.1 L782.0 500.7 L784.0 504.4 L786.0 508.0 L788.0 511.7 L790.0 515.5 L792.0 519.3 L794.0 523.1 L796.0 526.9 L798.0 530.7"/>
<path d="M676.0 554.6 L678.0 550.7 L680.0 546.9 L682.0 543.1 L684.0 539.3 L686.0 535.5 L688.0 531.7 L690.0 528.0 L692.0 524.4 L694.0 520.7 L696.0 517.1 L698.0 513.6 L700.0 510.1 L702.0 506.7 L704.0 503.3 L706.0 500.0 L708.0 496.8 L710.0 493.6 L712.0 490.6 L714.0 487.7 L716.0 484.9 L718.0 482.3 L720.0 479.8 L722.0 477.5 L724.0 475.4 L726.0 473.5 L728.0 471.9 L730.0 470.5 L732.0 469.4 L734.0 468.6 L736.0 468.2 L738.0 468.0 L740.0 468.2 L742.0 468.6 L744.0 469.4 L746.0 470.5 L748.0 471.9 L750.0 473.5 L752.0 475.4 L754.0 477.5 L756.0 479.8 L758.0 482.3 L760.0 484.9 L762.0 487.7 L764.0 490.6 L766.0 493.6 L768.0 496.8 L770.0 500.0 L772.0 503.3 L774.0 506.7 L776.0 510.1 L778.0 513.6 L780.0 517.1 L782.0 520.7 L784.0 524.4 L786.0 528.0 L788.0 531.7 L790.0 535.5 L792.0 539.3 L794.0 543.1 L796.0 546.9 L798.0 550.7"/>
<path d="M676.0 574.6 L678.0 570.7 L680.0 566.9 L682.0 563.1 L684.0 559.3 L686.0 555.5 L688.0 551.7 L690.0 548.0 L692.0 544.4 L694.0 540.7 L696.0 537.1 L698.0 533.6 L700.0 530.1 L702.0 526.7 L704.0 523.3 L706.0 520.0 L708.0 516.8 L710.0 513.6 L712.0 510.6 L714.0 507.7 L716.0 504.9 L718.0 502.3 L720.0 499.8 L722.0 497.5 L724.0 495.4 L726.0 493.5 L728.0 491.9 L730.0 490.5 L732.0 489.4 L734.0 488.6 L736.0 488.2 L738.0 488.0 L740.0 488.2 L742.0 488.6 L744.0 489.4 L746.0 490.5 L748.0 491.9 L750.0 493.5 L752.0 495.4 L754.0 497.5 L756.0 499.8 L758.0 502.3 L760.0 504.9 L762.0 507.7 L764.0 510.6 L766.0 513.6 L768.0 516.8 L770.0 520.0 L772.0 523.3 L774.0 526.7 L776.0 530.1 L778.0 533.6 L780.0 537.1 L782.0 540.7 L784.0 544.4 L786.0 548.0 L788.0 551.7 L790.0 555.5 L792.0 559.3 L794.0 563.1 L796.0 566.9 L798.0 570.7"/>
<path d="M676.0 594.6 L678.0 590.7 L680.0 586.9 L682.0 583.1 L684.0 579.3 L686.0 575.5 L688.0 571.7 L690.0 568.0 L692.0 564.4 L694.0 560.7 L696.0 557.1 L698.0 553.6 L700.0 550.1 L702.0 546.7 L704.0 543.3 L706.0 540.0 L708.0 536.8 L710.0 533.6 L712.0 530.6 L714.0 527.7 L716.0 524.9 L718.0 522.3 L720.0 519.8 L722.0 517.5 L724.0 515.4 L726.0 513.5 L728.0 511.9 L730.0 510.5 L732.0 509.4 L734.0 508.6 L736.0 508.2 L738.0 508.0 L740.0 508.2 L742.0 508.6 L744.0 509.4 L746.0 510.5 L748.0 511.9 L750.0 513.5 L752.0 515.4 L754.0 517.5 L756.0 519.8 L758.0 522.3 L760.0 524.9 L762.0 527.7 L764.0 530.6 L766.0 533.6 L768.0 536.8 L770.0 540.0 L772.0 543.3 L774.0 546.7 L776.0 550.1 L778.0 553.6 L780.0 557.1 L782.0 560.7 L784.0 564.4 L786.0 568.0 L788.0 571.7 L790.0 575.5 L792.0 579.3 L794.0 583.1 L796.0 586.9 L798.0 590.7"/>
<path d="M676.0 614.6 L678.0 610.7 L680.0 606.9 L682.0 603.1 L684.0 599.3 L686.0 595.5 L688.0 591.7 L690.0 588.0 L692.0 584.4 L694.0 580.7 L696.0 577.1 L698.0 573.6 L700.0 570.1 L702.0 566.7 L704.0 563.3 L706.0 560.0 L708.0 556.8 L710.0 553.6 L712.0 550.6 L714.0 547.7 L716.0 544.9 L718.0 542.3 L720.0 539.8 L722.0 537.5 L724.0 535.4 L726.0 533.5 L728.0 531.9 L730.0 530.5 L732.0 529.4 L734.0 528.6 L736.0 528.2 L738.0 528.0 L740.0 528.2 L742.0 528.6 L744.0 529.4 L746.0 530.5 L748.0 531.9 L750.0 533.5 L752.0 535.4 L754.0 537.5 L756.0 539.8 L758.0 542.3 L760.0 544.9 L762.0 547.7 L764.0 550.6 L766.0 553.6 L768.0 556.8 L770.0 560.0 L772.0 563.3 L774.0 566.7 L776.0 570.1 L778.0 573.6 L780.0 577.1 L782.0 580.7 L784.0 584.4 L786.0 588.0 L788.0 591.7 L790.0 595.5 L792.0 599.3 L794.0 603.1 L796.0 606.9 L798.0 610.7"/>
<path d="M676.0 634.6 L678.0 630.7 L680.0 626.9 L682.0 623.1 L684.0 619.3 L686.0 615.5 L688.0 611.7 L690.0 608.0 L692.0 604.4 L694.0 600.7 L696.0 597.1 L698.0 593.6 L700.0 590.1 L702.0 586.7 L704.0 583.3 L706.0 580.0 L708.0 576.8 L710.0 573.6 L712.0 570.6 L714.0 567.7 L716.0 564.9 L718.0 562.3 L720.0 559.8 L722.0 557.5 L724.0 555.4 L726.0 553.5 L728.0 551.9 L730.0 550.5 L732.0 549.4 L734.0 548.6 L736.0 548.2 L738.0 548.0 L740.0 548.2 L742.0 548.6 L744.0 549.4 L746.0 550.5 L748.0 551.9 L750.0 553.5 L752.0 555.4 L754.0 557.5 L756.0 559.8 L758.0 562.3 L760.0 564.9 L762.0 567.7 L764.0 570.6 L766.0 573.6 L768.0 576.8 L770.0 580.0 L772.0 583.3 L774.0 586.7 L776.0 590.1 L778.0 593.6 L780.0 597.1 L782.0 600.7 L784.0 604.4 L786.0 608.0 L788.0 611.7 L790.0 615.5 L792.0 619.3 L794.0 623.1 L796.0 626.9 L798.0 630.7"/>
<path d="M676.0 654.6 L678.0 650.7 L680.0 646.9 L682.0 643.1 L684.0 639.3 L686.0 635.5 L688.0 631.7 L690.0 628.0 L692.0 624.4 L694.0 620.7 L696.0 617.1 L698.0 613.6 L700.0 610.1 L702.0 606.7 L704.0 603.3 L706.0 600.0 L708.0 596.8 L710.0 593.6 L712.0 590.6 L714.0 587.7 L716.0 584.9 L718.0 582.3 L720.0 579.8 L722.0 577.5 L724.0 575.4 L726.0 573.5 L728.0 571.9 L730.0 570.5 L732.0 569.4 L734.0 568.6 L736.0 568.2 L738.0 568.0 L740.0 568.2 L742.0 568.6 L744.0 569.4 L746.0 570.5 L748.0 571.9 L750.0 573.5 L752.0 575.4 L754.0 577.5 L756.0 579.8 L758.0 582.3 L760.0 584.9 L762.0 587.7 L764.0 590.6 L766.0 593.6 L768.0 596.8 L770.0 600.0 L772.0 603.3 L774.0 606.7 L776.0 610.1 L778.0 613.6 L780.0 617.1 L782.0 620.7 L784.0 624.4 L786.0 628.0 L788.0 631.7 L790.0 635.5 L792.0 639.3 L794.0 643.1 L796.0 646.9 L798.0 650.7"/>
<path d="M676.0 674.6 L678.0 670.7 L680.0 666.9 L682.0 663.1 L684.0 659.3 L686.0 655.5 L688.0 651.7 L690.0 648.0 L692.0 644.4 L694.0 640.7 L696.0 637.1 L698.0 633.6 L700.0 630.1 L702.0 626.7 L704.0 623.3 L706.0 620.0 L708.0 616.8 L710.0 613.6 L712.0 610.6 L714.0 607.7 L716.0 604.9 L718.0 602.3 L720.0 599.8 L722.0 597.5 L724.0 595.4 L726.0 593.5 L728.0 591.9 L730.0 590.5 L732.0 589.4 L734.0 588.6 L736.0 588.2 L738.0 588.0 L740.0 588.2 L742.0 588.6 L744.0 589.4 L746.0 590.5 L748.0 591.9 L750.0 593.5 L752.0 595.4 L754.0 597.5 L756.0 599.8 L758.0 602.3 L760.0 604.9 L762.0 607.7 L764.0 610.6 L766.0 613.6 L768.0 616.8 L770.0 620.0 L772.0 623.3 L774.0 626.7 L776.0 630.1 L778.0 633.6 L780.0 637.1 L782.0 640.7 L784.0 644.4 L786.0 648.0 L788.0 651.7 L790.0 655.5 L792.0 659.3 L794.0 663.1 L796.0 666.9 L798.0 670.7"/>
<path d="M676.0 694.6 L678.0 690.7 L680.0 686.9 L682.0 683.1 L684.0 679.3 L686.0 675.5 L688.0 671.7 L690.0 668.0 L692.0 664.4 L694.0 660.7 L696.0 657.1 L698.0 653.6 L700.0 650.1 L702.0 646.7 L704.0 643.3 L706.0 640.0 L708.0 636.8 L710.0 633.6 L712.0 630.6 L714.0 627.7 L716.0 624.9 L718.0 622.3 L720.0 619.8 L722.0 617.5 L724.0 615.4 L726.0 613.5 L728.0 611.9 L730.0 610.5 L732.0 609.4 L734.0 608.6 L736.0 608.2 L738.0 608.0 L740.0 608.2 L742.0 608.6 L744.0 609.4 L746.0 610.5 L748.0 611.9 L750.0 613.5 L752.0 615.4 L754.0 617.5 L756.0 619.8 L758.0 622.3 L760.0 624.9 L762.0 627.7 L764.0 630.6 L766.0 633.6 L768.0 636.8 L770.0 640.0 L772.0 643.3 L774.0 646.7 L776.0 650.1 L778.0 653.6 L780.0 657.1 L782.0 660.7 L784.0 664.4 L786.0 668.0 L788.0 671.7 L790.0 675.5 L792.0 679.3 L794.0 683.1 L796.0 686.9 L798.0 690.7"/>
<path d="M676.0 714.6 L678.0 710.7 L680.0 706.9 L682.0 703.1 L684.0 699.3 L686.0 695.5 L688.0 691.7 L690.0 688.0 L692.0 684.4 L694.0 680.7 L696.0 677.1 L698.0 673.6 L700.0 670.1 L702.0 666.7 L704.0 663.3 L706.0 660.0 L708.0 656.8 L710.0 653.6 L712.0 650.6 L714.0 647.7 L716.0 644.9 L718.0 642.3 L720.0 639.8 L722.0 637.5 L724.0 635.4 L726.0 633.5 L728.0 631.9 L730.0 630.5 L732.0 629.4 L734.0 628.6 L736.0 628.2 L738.0 628.0 L740.0 628.2 L742.0 628.6 L744.0 629.4 L746.0 630.5 L748.0 631.9 L750.0 633.5 L752.0 635.4 L754.0 637.5 L756.0 639.8 L758.0 642.3 L760.0 644.9 L762.0 647.7 L764.0 650.6 L766.0 653.6 L768.0 656.8 L770.0 660.0 L772.0 663.3 L774.0 666.7 L776.0 670.1 L778.0 673.6 L780.0 677.1 L782.0 680.7 L784.0 684.4 L786.0 688.0 L788.0 691.7 L790.0 695.5 L792.0 699.3 L794.0 703.1 L796.0 706.9 L798.0 710.7"/>
<path d="M676.0 734.6 L678.0 730.7 L680.0 726.9 L682.0 723.1 L684.0 719.3 L686.0 715.5 L688.0 711.7 L690.0 708.0 L692.0 704.4 L694.0 700.7 L696.0 697.1 L698.0 693.6 L700.0 690.1 L702.0 686.7 L704.0 683.3 L706.0 680.0 L708.0 676.8 L710.0 673.6 L712.0 670.6 L714.0 667.7 L716.0 664.9 L718.0 662.3 L720.0 659.8 L722.0 657.5 L724.0 655.4 L726.0 653.5 L728.0 651.9 L730.0 650.5 L732.0 649.4 L734.0 648.6 L736.0 648.2 L738.0 648.0 L740.0 648.2 L742.0 648.6 L744.0 649.4 L746.0 650.5 L748.0 651.9 L750.0 653.5 L752.0 655.4 L754.0 657.5 L756.0 659.8 L758.0 662.3 L760.0 664.9 L762.0 667.7 L764.0 670.6 L766.0 673.6 L768.0 676.8 L770.0 680.0 L772.0 683.3 L774.0 686.7 L776.0 690.1 L778.0 693.6 L780.0 697.1 L782.0 700.7 L784.0 704.4 L786.0 708.0 L788.0 711.7 L790.0 715.5 L792.0 719.3 L794.0 723.1 L796.0 726.9 L798.0 730.7"/>
</g>
<path d="M678.0 808.1 L680.0 810.1 L682.0 812.0 L684.0 813.8 L686.0 815.6 L688.0 817.4 L690.0 819.0 L692.0 820.6 L694.0 822.1 L696.0 823.5 L698.0 824.9 L700.0 826.2 L702.0 827.5 L704.0 828.6 L706.0 829.7 L708.0 830.8 L710.0 831.7 L712.0 832.6 L714.0 833.5 L716.0 834.2 L718.0 834.9 L720.0 835.5 L722.0 836.1 L724.0 836.5 L726.0 837.0 L728.0 837.3 L730.0 837.6 L732.0 837.8 L734.0 837.9 L736.0 838.0 L738.0 838.0 L740.0 837.9 L742.0 837.8 L744.0 837.6 L746.0 837.3 L748.0 837.0 L750.0 836.5 L752.0 836.1 L754.0 835.5 L756.0 834.9 L758.0 834.2 L760.0 833.5 L762.0 832.6 L764.0 831.7 L766.0 830.8 L768.0 829.7 L770.0 828.6 L772.0 827.5 L774.0 826.2 L776.0 824.9 L778.0 823.5 L780.0 822.1 L782.0 820.6 L784.0 819.0 L786.0 817.4 L788.0 815.6 L790.0 813.8 L792.0 812.0 L794.0 810.1 L796.0 808.1 L796.0 849.0 L678.0 849.0 Z" fill="#7b7b7b" fill-opacity="0.3" shape-rendering="auto"/>
<ellipse cx="737" cy="846" rx="42" ry="7" fill="#545454" fill-opacity="0.6" shape-rendering="auto"/>
<path d="M698 671 L737 730 L776 671 Z" fill="#505050" fill-opacity="0.22" shape-rendering="auto"/>
<ellipse cx="703" cy="792" rx="22" ry="45" fill="url(#rg8)" shape-rendering="auto"/>
<ellipse cx="771" cy="792" rx="22" ry="45" fill="url(#rg9)" shape-rendering="auto"/>
<ellipse cx="737" cy="760" rx="50" ry="14" fill="url(#rg10)" shape-rendering="auto"/>
<g clip-path="url(#c5)" fill="none" stroke="#737373" stroke-width="2.5" stroke-opacity="0.6" shape-rendering="auto">
<path d="M676.0 712.7 L677.0 719.6 L678.0 726.1 L679.0 732.5 L680.0 738.5 L681.0 744.3 L682.0 749.9 L683.0 755.2 L684.0 760.2 L685.0 765.0 L686.0 769.6 L687.0 774.0 L688.0 778.2 L689.0 782.1 L690.0 785.9 L691.0 789.4 L692.0 792.8 L693.0 796.0 L694.0 799.0 L695.0 801.9 L696.0 804.5 L697.0 807.1 L698.0 809.4 L699.0 811.7 L700.0 813.7 L701.0 815.7 L702.0 817.5 L703.0 819.2 L704.0 820.8 L705.0 822.2 L706.0 823.6 L707.0 824.8 L708.0 825.9 L709.0 827.0 L710.0 827.9 L711.0 828.8 L712.0 829.6 L713.0 830.3 L714.0 831.0 L715.0 831.6 L716.0 832.1 L717.0 832.5 L718.0 832.9 L719.0 833.3 L720.0 833.6 L721.0 833.9 L722.0 834.1 L723.0 834.3 L724.0 834.5 L725.0 834.6 L726.0 834.7 L727.0 834.8 L728.0 834.8 L729.0 834.9 L730.0 834.9 L731.0 835.0 L732.0 835.0 L733.0 835.0 L734.0 835.0 L735.0 835.0 L736.0 835.0 L737.0 835.0 L738.0 835.0 L739.0 835.0 L740.0 835.0 L741.0 835.0 L742.0 835.0 L743.0 835.0 L744.0 834.9 L745.0 834.9 L746.0 834.8 L747.0 834.8 L748.0 834.7 L749.0 834.6 L750.0 834.5 L751.0 834.3 L752.0 834.1 L753.0 833.9 L754.0 833.6 L755.0 833.3 L756.0 832.9 L757.0 832.5 L758.0 832.1 L759.0 831.6 L760.0 831.0 L761.0 830.3 L762.0 829.6 L763.0 828.8 L764.0 827.9 L765.0 827.0 L766.0 825.9 L767.0 824.8 L768.0 823.6 L769.0 822.2 L770.0 820.8 L771.0 819.2 L772.0 817.5 L773.0 815.7 L774.0 813.7 L775.0 811.7 L776.0 809.4 L777.0 807.1 L778.0 804.5 L779.0 801.9 L780.0 799.0 L781.0 796.0 L782.0 792.8 L783.0 789.4 L784.0 785.9 L785.0 782.1 L786.0 778.2 L787.0 774.0 L788.0 769.6 L789.0 765.0 L790.0 760.2 L791.0 755.2 L792.0 749.9 L793.0 744.3 L794.0 738.5 L795.0 732.5 L796.0 726.1 L797.0 719.6 L798.0 712.7"/>
<path d="M676.0 678.6 L677.0 683.2 L678.0 687.7 L679.0 692.2 L680.0 696.5 L681.0 700.8 L682.0 705.0 L683.0 709.2 L684.0 713.3 L685.0 717.2 L686.0 721.2 L687.0 725.0 L688.0 728.8 L689.0 732.4 L690.0 736.1 L691.0 739.6 L692.0 743.0 L693.0 746.4 L694.0 749.7 L695.0 753.0 L696.0 756.1 L697.0 759.2 L698.0 762.2 L699.0 765.1 L700.0 768.0 L701.0 770.8 L702.0 773.5 L703.0 776.1 L704.0 778.6 L705.0 781.1 L706.0 783.5 L707.0 785.8 L708.0 788.0 L709.0 790.2 L710.0 792.3 L711.0 794.3 L712.0 796.2 L713.0 798.1 L714.0 799.9 L715.0 801.6 L716.0 803.2 L717.0 804.8 L718.0 806.3 L719.0 807.7 L720.0 809.0 L721.0 810.3 L722.0 811.5 L723.0 812.6 L724.0 813.6 L725.0 814.5 L726.0 815.4 L727.0 816.2 L728.0 816.9 L729.0 817.6 L730.0 818.1 L731.0 818.6 L732.0 819.0 L733.0 819.4 L734.0 819.7 L735.0 819.8 L736.0 820.0 L737.0 820.0 L738.0 820.0 L739.0 819.8 L740.0 819.7 L741.0 819.4 L742.0 819.0 L743.0 818.6 L744.0 818.1 L745.0 817.6 L746.0 816.9 L747.0 816.2 L748.0 815.4 L749.0 814.5 L750.0 813.6 L751.0 812.6 L752.0 811.5 L753.0 810.3 L754.0 809.0 L755.0 807.7 L756.0 806.3 L757.0 804.8 L758.0 803.2 L759.0 801.6 L760.0 799.9 L761.0 798.1 L762.0 796.2 L763.0 794.3 L764.0 792.3 L765.0 790.2 L766.0 788.0 L767.0 785.8 L768.0 783.5 L769.0 781.1 L770.0 778.6 L771.0 776.1 L772.0 773.5 L773.0 770.8 L774.0 768.0 L775.0 765.1 L776.0 762.2 L777.0 759.2 L778.0 756.1 L779.0 753.0 L780.0 749.7 L781.0 746.4 L782.0 743.0 L783.0 739.6 L784.0 736.1 L785.0 732.4 L786.0 728.8 L787.0 725.0 L788.0 721.2 L789.0 717.2 L790.0 713.3 L791.0 709.2 L792.0 705.0 L793.0 700.8 L794.0 696.5 L795.0 692.2 L796.0 687.7 L797.0 683.2 L798.0 678.6"/>
<path d="M676.0 622.0 L677.0 625.8 L678.0 629.6 L679.0 633.3 L680.0 637.0 L681.0 640.8 L682.0 644.4 L683.0 648.1 L684.0 651.8 L685.0 655.4 L686.0 659.0 L687.0 662.6 L688.0 666.1 L689.0 669.7 L690.0 673.2 L691.0 676.7 L692.0 680.2 L693.0 683.6 L694.0 687.0 L695.0 690.4 L696.0 693.8 L697.0 697.2 L698.0 700.5 L699.0 703.8 L700.0 707.1 L701.0 710.3 L702.0 713.6 L703.0 716.8 L704.0 719.9 L705.0 723.1 L706.0 726.2 L707.0 729.3 L708.0 732.3 L709.0 735.3 L710.0 738.3 L711.0 741.3 L712.0 744.2 L713.0 747.1 L714.0 749.9 L715.0 752.7 L716.0 755.5 L717.0 758.2 L718.0 760.9 L719.0 763.6 L720.0 766.2 L721.0 768.8 L722.0 771.3 L723.0 773.7 L724.0 776.1 L725.0 778.5 L726.0 780.8 L727.0 783.0 L728.0 785.2 L729.0 787.3 L730.0 789.3 L731.0 791.3 L732.0 793.1 L733.0 794.8 L734.0 796.5 L735.0 797.9 L736.0 799.1 L737.0 800.0 L738.0 799.1 L739.0 797.9 L740.0 796.5 L741.0 794.8 L742.0 793.1 L743.0 791.3 L744.0 789.3 L745.0 787.3 L746.0 785.2 L747.0 783.0 L748.0 780.8 L749.0 778.5 L750.0 776.1 L751.0 773.7 L752.0 771.3 L753.0 768.8 L754.0 766.2 L755.0 763.6 L756.0 760.9 L757.0 758.2 L758.0 755.5 L759.0 752.7 L760.0 749.9 L761.0 747.1 L762.0 744.2 L763.0 741.3 L764.0 738.3 L765.0 735.3 L766.0 732.3 L767.0 729.3 L768.0 726.2 L769.0 723.1 L770.0 719.9 L771.0 716.8 L772.0 713.6 L773.0 710.3 L774.0 707.1 L775.0 703.8 L776.0 700.5 L777.0 697.2 L778.0 693.8 L779.0 690.4 L780.0 687.0 L781.0 683.6 L782.0 680.2 L783.0 676.7 L784.0 673.2 L785.0 669.7 L786.0 666.1 L787.0 662.6 L788.0 659.0 L789.0 655.4 L790.0 651.8 L791.0 648.1 L792.0 644.4 L793.0 640.8 L794.0 637.0 L795.0 633.3 L796.0 629.6 L797.0 625.8 L798.0 622.0"/>
<path d="M676.0 563.6 L677.0 568.1 L678.0 572.5 L679.0 576.9 L680.0 581.3 L681.0 585.7 L682.0 590.0 L683.0 594.3 L684.0 598.6 L685.0 602.9 L686.0 607.1 L687.0 611.3 L688.0 615.5 L689.0 619.7 L690.0 623.8 L691.0 627.9 L692.0 632.0 L693.0 636.1 L694.0 640.1 L695.0 644.1 L696.0 648.1 L697.0 652.0 L698.0 655.9 L699.0 659.8 L700.0 663.7 L701.0 667.5 L702.0 671.3 L703.0 675.1 L704.0 678.8 L705.0 682.5 L706.0 686.1 L707.0 689.8 L708.0 693.4 L709.0 696.9 L710.0 700.4 L711.0 703.9 L712.0 707.3 L713.0 710.7 L714.0 714.1 L715.0 717.4 L716.0 720.7 L717.0 723.9 L718.0 727.0 L719.0 730.2 L720.0 733.2 L721.0 736.2 L722.0 739.2 L723.0 742.1 L724.0 744.9 L725.0 747.7 L726.0 750.4 L727.0 753.0 L728.0 755.6 L729.0 758.1 L730.0 760.5 L731.0 762.7 L732.0 764.9 L733.0 766.9 L734.0 768.8 L735.0 770.5 L736.0 772.0 L737.0 773.0 L738.0 772.0 L739.0 770.5 L740.0 768.8 L741.0 766.9 L742.0 764.9 L743.0 762.7 L744.0 760.5 L745.0 758.1 L746.0 755.6 L747.0 753.0 L748.0 750.4 L749.0 747.7 L750.0 744.9 L751.0 742.1 L752.0 739.2 L753.0 736.2 L754.0 733.2 L755.0 730.2 L756.0 727.0 L757.0 723.9 L758.0 720.7 L759.0 717.4 L760.0 714.1 L761.0 710.7 L762.0 707.3 L763.0 703.9 L764.0 700.4 L765.0 696.9 L766.0 693.4 L767.0 689.8 L768.0 686.1 L769.0 682.5 L770.0 678.8 L771.0 675.1 L772.0 671.3 L773.0 667.5 L774.0 663.7 L775.0 659.8 L776.0 655.9 L777.0 652.0 L778.0 648.1 L779.0 644.1 L780.0 640.1 L781.0 636.1 L782.0 632.0 L783.0 627.9 L784.0 623.8 L785.0 619.7 L786.0 615.5 L787.0 611.3 L788.0 607.1 L789.0 602.9 L790.0 598.6 L791.0 594.3 L792.0 590.0 L793.0 585.7 L794.0 581.3 L795.0 576.9 L796.0 572.5 L797.0 568.1 L798.0 563.6"/>
<path d="M676.0 480.7 L677.0 486.1 L678.0 491.4 L679.0 496.7 L680.0 502.0 L681.0 507.2 L682.0 512.4 L683.0 517.6 L684.0 522.7 L685.0 527.8 L686.0 532.9 L687.0 538.0 L688.0 543.0 L689.0 548.0 L690.0 553.0 L691.0 557.9 L692.0 562.8 L693.0 567.7 L694.0 572.5 L695.0 577.3 L696.0 582.1 L697.0 586.8 L698.0 591.5 L699.0 596.2 L700.0 600.8 L701.0 605.4 L702.0 610.0 L703.0 614.5 L704.0 619.0 L705.0 623.4 L706.0 627.8 L707.0 632.1 L708.0 636.4 L709.0 640.7 L710.0 644.9 L711.0 649.1 L712.0 653.2 L713.0 657.3 L714.0 661.3 L715.0 665.3 L716.0 669.2 L717.0 673.0 L718.0 676.8 L719.0 680.6 L720.0 684.3 L721.0 687.9 L722.0 691.4 L723.0 694.9 L724.0 698.3 L725.0 701.7 L726.0 704.9 L727.0 708.1 L728.0 711.1 L729.0 714.1 L730.0 716.9 L731.0 719.7 L732.0 722.3 L733.0 724.7 L734.0 727.0 L735.0 729.0 L736.0 730.8 L737.0 732.0 L738.0 730.8 L739.0 729.0 L740.0 727.0 L741.0 724.7 L742.0 722.3 L743.0 719.7 L744.0 716.9 L745.0 714.1 L746.0 711.1 L747.0 708.1 L748.0 704.9 L749.0 701.7 L750.0 698.3 L751.0 694.9 L752.0 691.4 L753.0 687.9 L754.0 684.3 L755.0 680.6 L756.0 676.8 L757.0 673.0 L758.0 669.2 L759.0 665.3 L760.0 661.3 L761.0 657.3 L762.0 653.2 L763.0 649.1 L764.0 644.9 L765.0 640.7 L766.0 636.4 L767.0 632.1 L768.0 627.8 L769.0 623.4 L770.0 619.0 L771.0 614.5 L772.0 610.0 L773.0 605.4 L774.0 600.8 L775.0 596.2 L776.0 591.5 L777.0 586.8 L778.0 582.1 L779.0 577.3 L780.0 572.5 L781.0 567.7 L782.0 562.8 L783.0 557.9 L784.0 553.0 L785.0 548.0 L786.0 543.0 L787.0 538.0 L788.0 532.9 L789.0 527.8 L790.0 522.7 L791.0 517.6 L792.0 512.4 L793.0 507.2 L794.0 502.0 L795.0 496.7 L796.0 491.4 L797.0 486.1 L798.0 480.7"/>
</g>
<rect x="866" y="556" width="138" height="293" fill="url(#g11)"/>
<path d="M866.0 566.0 L870.0 545.0 L876.0 560.0 L881.0 548.0 L887.0 560.0 L892.0 551.0 L898.0 560.0 L903.0 545.0 L909.0 560.0 L914.0 548.0 L920.0 560.0 L925.0 551.0 L931.0 560.0 L936.0 545.0 L942.0 560.0 L947.0 548.0 L953.0 560.0 L958.0 551.0 L964.0 560.0 L969.0 545.0 L975.0 560.0 L980.0 548.0 L986.0 560.0 L991.0 551.0 L997.0 560.0 L1002.0 545.0 L1004.0 560.0 L1004.0 566.0 Z" fill="#3c3c3c" shape-rendering="auto"/>
<g clip-path="url(#c6)" fill="none" stroke="#4b4b4b" stroke-width="4" stroke-opacity="0.6" shape-rendering="auto">
<path d="M864.0 566.4 L866.0 562.6 L868.0 558.9 L870.0 555.1 L872.0 551.4 L874.0 547.7 L876.0 544.0 L878.0 540.3 L880.0 536.6 L882.0 533.0 L884.0 529.4 L886.0 525.8 L888.0 522.2 L890.0 518.6 L892.0 515.1 L894.0 511.5 L896.0 508.1 L898.0 504.6 L900.0 501.2 L902.0 497.8 L904.0 494.5 L906.0 491.2 L908.0 488.0 L910.0 484.8 L912.0 481.7 L914.0 478.7 L916.0 475.7 L918.0 472.9 L920.0 470.1 L922.0 467.4 L924.0 464.8 L926.0 462.4 L928.0 460.1 L930.0 458.0 L932.0 456.0 L934.0 454.2 L936.0 452.6 L938.0 451.2 L940.0 450.1 L942.0 449.2 L944.0 448.5 L946.0 448.1 L948.0 448.0 L950.0 448.1 L952.0 448.5 L954.0 449.2 L956.0 450.1 L958.0 451.2 L960.0 452.6 L962.0 454.2 L964.0 456.0 L966.0 458.0 L968.0 460.1 L970.0 462.4 L972.0 464.8 L974.0 467.4 L976.0 470.1 L978.0 472.9 L980.0 475.7 L982.0 478.7 L984.0 481.7 L986.0 484.8 L988.0 488.0 L990.0 491.2 L992.0 494.5 L994.0 497.8 L996.0 501.2 L998.0 504.6 L1000.0 508.1 L1002.0 511.5 L1004.0 515.1 L1006.0 518.6"/>
<path d="M864.0 586.4 L866.0 582.6 L868.0 578.9 L870.0 575.1 L872.0 571.4 L874.0 567.7 L876.0 564.0 L878.0 560.3 L880.0 556.6 L882.0 553.0 L884.0 549.4 L886.0 545.8 L888.0 542.2 L890.0 538.6 L892.0 535.1 L894.0 531.5 L896.0 528.1 L898.0 524.6 L900.0 521.2 L902.0 517.8 L904.0 514.5 L906.0 511.2 L908.0 508.0 L910.0 504.8 L912.0 501.7 L914.0 498.7 L916.0 495.7 L918.0 492.9 L920.0 490.1 L922.0 487.4 L924.0 484.8 L926.0 482.4 L928.0 480.1 L930.0 478.0 L932.0 476.0 L934.0 474.2 L936.0 472.6 L938.0 471.2 L940.0 470.1 L942.0 469.2 L944.0 468.5 L946.0 468.1 L948.0 468.0 L950.0 468.1 L952.0 468.5 L954.0 469.2 L956.0 470.1 L958.0 471.2 L960.0 472.6 L962.0 474.2 L964.0 476.0 L966.0 478.0 L968.0 480.1 L970.0 482.4 L972.0 484.8 L974.0 487.4 L976.0 490.1 L978.0 492.9 L980.0 495.7 L982.0 498.7 L984.0 501.7 L986.0 504.8 L988.0 508.0 L990.0 511.2 L992.0 514.5 L994.0 517.8 L996.0 521.2 L998.0 524.6 L1000.0 528.1 L1002.0 531.5 L1004.0 535.1 L1006.0 538.6"/>
<path d="M864.0 606.4 L866.0 602.6 L868.0 598.9 L870.0 595.1 L872.0 591.4 L874.0 587.7 L876.0 584.0 L878.0 580.3 L880.0 576.6 L882.0 573.0 L884.0 569.4 L886.0 565.8 L888.0 562.2 L890.0 558.6 L892.0 555.1 L894.0 551.5 L896.0 548.1 L898.0 544.6 L900.0 541.2 L902.0 537.8 L904.0 534.5 L906.0 531.2 L908.0 528.0 L910.0 524.8 L912.0 521.7 L914.0 518.7 L916.0 515.7 L918.0 512.9 L920.0 510.1 L922.0 507.4 L924.0 504.8 L926.0 502.4 L928.0 500.1 L930.0 498.0 L932.0 496.0 L934.0 494.2 L936.0 492.6 L938.0 491.2 L940.0 490.1 L942.0 489.2 L944.0 488.5 L946.0 488.1 L948.0 488.0 L950.0 488.1 L952.0 488.5 L954.0 489.2 L956.0 490.1 L958.0 491.2 L960.0 492.6 L962.0 494.2 L964.0 496.0 L966.0 498.0 L968.0 500.1 L970.0 502.4 L972.0 504.8 L974.0 507.4 L976.0 510.1 L978.0 512.9 L980.0 515.7 L982.0 518.7 L984.0 521.7 L986.0 524.8 L988.0 528.0 L990.0 531.2 L992.0 534.5 L994.0 537.8 L996.0 541.2 L998.0 544.6 L1000.0 548.1 L1002.0 551.5 L1004.0 555.1 L1006.0 558.6"/>
<path d="M864.0 626.4 L866.0 622.6 L868.0 618.9 L870.0 615.1 L872.0 611.4 L874.0 607.7 L876.0 604.0 L878.0 600.3 L880.0 596.6 L882.0 593.0 L884.0 589.4 L886.0 585.8 L888.0 582.2 L890.0 578.6 L892.0 575.1 L894.0 571.5 L896.0 568.1 L898.0 564.6 L900.0 561.2 L902.0 557.8 L904.0 554.5 L906.0 551.2 L908.0 548.0 L910.0 544.8 L912.0 541.7 L914.0 538.7 L916.0 535.7 L918.0 532.9 L920.0 530.1 L922.0 527.4 L924.0 524.8 L926.0 522.4 L928.0 520.1 L930.0 518.0 L932.0 516.0 L934.0 514.2 L936.0 512.6 L938.0 511.2 L940.0 510.1 L942.0 509.2 L944.0 508.5 L946.0 508.1 L948.0 508.0 L950.0 508.1 L952.0 508.5 L954.0 509.2 L956.0 510.1 L958.0 511.2 L960.0 512.6 L962.0 514.2 L964.0 516.0 L966.0 518.0 L968.0 520.1 L970.0 522.4 L972.0 524.8 L974.0 527.4 L976.0 530.1 L978.0 532.9 L980.0 535.7 L982.0 538.7 L984.0 541.7 L986.0 544.8 L988.0 548.0 L990.0 551.2 L992.0 554.5 L994.0 557.8 L996.0 561.2 L998.0 564.6 L1000.0 568.1 L1002.0 571.5 L1004.0 575.1 L1006.0 578.6"/>
<path d="M864.0 646.4 L866.0 642.6 L868.0 638.9 L870.0 635.1 L872.0 631.4 L874.0 627.7 L876.0 624.0 L878.0 620.3 L880.0 616.6 L882.0 613.0 L884.0 609.4 L886.0 605.8 L888.0 602.2 L890.0 598.6 L892.0 595.1 L894.0 591.5 L896.0 588.1 L898.0 584.6 L900.0 581.2 L902.0 577.8 L904.0 574.5 L906.0 571.2 L908.0 568.0 L910.0 564.8 L912.0 561.7 L914.0 558.7 L916.0 555.7 L918.0 552.9 L920.0 550.1 L922.0 547.4 L924.0 544.8 L926.0 542.4 L928.0 540.1 L930.0 538.0 L932.0 536.0 L934.0 534.2 L936.0 532.6 L938.0 531.2 L940.0 530.1 L942.0 529.2 L944.0 528.5 L946.0 528.1 L948.0 528.0 L950.0 528.1 L952.0 528.5 L954.0 529.2 L956.0 530.1 L958.0 531.2 L960.0 532.6 L962.0 534.2 L964.0 536.0 L966.0 538.0 L968.0 540.1 L970.0 542.4 L972.0 544.8 L974.0 547.4 L976.0 550.1 L978.0 552.9 L980.0 555.7 L982.0 558.7 L984.0 561.7 L986.0 564.8 L988.0 568.0 L990.0 571.2 L992.0 574.5 L994.0 577.8 L996.0 581.2 L998.0 584.6 L1000.0 588.1 L1002.0 591.5 L1004.0 595.1 L1006.0 598.6"/>
<path d="M864.0 666.4 L866.0 662.6 L868.0 658.9 L870.0 655.1 L872.0 651.4 L874.0 647.7 L876.0 644.0 L878.0 640.3 L880.0 636.6 L882.0 633.0 L884.0 629.4 L886.0 625.8 L888.0 622.2 L890.0 618.6 L892.0 615.1 L894.0 611.5 L896.0 608.1 L898.0 604.6 L900.0 601.2 L902.0 597.8 L904.0 594.5 L906.0 591.2 L908.0 588.0 L910.0 584.8 L912.0 581.7 L914.0 578.7 L916.0 575.7 L918.0 572.9 L920.0 570.1 L922.0 567.4 L924.0 564.8 L926.0 562.4 L928.0 560.1 L930.0 558.0 L932.0 556.0 L934.0 554.2 L936.0 552.6 L938.0 551.2 L940.0 550.1 L942.0 549.2 L944.0 548.5 L946.0 548.1 L948.0 548.0 L950.0 548.1 L952.0 548.5 L954.0 549.2 L956.0 550.1 L958.0 551.2 L960.0 552.6 L962.0 554.2 L964.0 556.0 L966.0 558.0 L968.0 560.1 L970.0 562.4 L972.0 564.8 L974.0 567.4 L976.0 570.1 L978.0 572.9 L980.0 575.7 L982.0 578.7 L984.0 581.7 L986.0 584.8 L988.0 588.0 L990.0 591.2 L992.0 594.5 L994.0 597.8 L996.0 601.2 L998.0 604.6 L1000.0 608.1 L1002.0 611.5 L1004.0 615.1 L1006.0 618.6"/>
<path d="M864.0 686.4 L866.0 682.6 L868.0 678.9 L870.0 675.1 L872.0 671.4 L874.0 667.7 L876.0 664.0 L878.0 660.3 L880.0 656.6 L882.0 653.0 L884.0 649.4 L886.0 645.8 L888.0 642.2 L890.0 638.6 L892.0 635.1 L894.0 631.5 L896.0 628.1 L898.0 624.6 L900.0 621.2 L902.0 617.8 L904.0 614.5 L906.0 611.2 L908.0 608.0 L910.0 604.8 L912.0 601.7 L914.0 598.7 L916.0 595.7 L918.0 592.9 L920.0 590.1 L922.0 587.4 L924.0 584.8 L926.0 582.4 L928.0 580.1 L930.0 578.0 L932.0 576.0 L934.0 574.2 L936.0 572.6 L938.0 571.2 L940.0 570.1 L942.0 569.2 L944.0 568.5 L946.0 568.1 L948.0 568.0 L950.0 568.1 L952.0 568.5 L954.0 569.2 L956.0 570.1 L958.0 571.2 L960.0 572.6 L962.0 574.2 L964.0 576.0 L966.0 578.0 L968.0 580.1 L970.0 582.4 L972.0 584.8 L974.0 587.4 L976.0 590.1 L978.0 592.9 L980.0 595.7 L982.0 598.7 L984.0 601.7 L986.0 604.8 L988.0 608.0 L990.0 611.2 L992.0 614.5 L994.0 617.8 L996.0 621.2 L998.0 624.6 L1000.0 628.1 L1002.0 631.5 L1004.0 635.1 L1006.0 638.6"/>
<path d="M864.0 706.4 L866.0 702.6 L868.0 698.9 L870.0 695.1 L872.0 691.4 L874.0 687.7 L876.0 684.0 L878.0 680.3 L880.0 676.6 L882.0 673.0 L884.0 669.4 L886.0 665.8 L888.0 662.2 L890.0 658.6 L892.0 655.1 L894.0 651.5 L896.0 648.1 L898.0 644.6 L900.0 641.2 L902.0 637.8 L904.0 634.5 L906.0 631.2 L908.0 628.0 L910.0 624.8 L912.0 621.7 L914.0 618.7 L916.0 615.7 L918.0 612.9 L920.0 610.1 L922.0 607.4 L924.0 604.8 L926.0 602.4 L928.0 600.1 L930.0 598.0 L932.0 596.0 L934.0 594.2 L936.0 592.6 L938.0 591.2 L940.0 590.1 L942.0 589.2 L944.0 588.5 L946.0 588.1 L948.0 588.0 L950.0 588.1 L952.0 588.5 L954.0 589.2 L956.0 590.1 L958.0 591.2 L960.0 592.6 L962.0 594.2 L964.0 596.0 L966.0 598.0 L968.0 600.1 L970.0 602.4 L972.0 604.8 L974.0 607.4 L976.0 610.1 L978.0 612.9 L980.0 615.7 L982.0 618.7 L984.0 621.7 L986.0 624.8 L988.0 628.0 L990.0 631.2 L992.0 634.5 L994.0 637.8 L996.0 641.2 L998.0 644.6 L1000.0 648.1 L1002.0 651.5 L1004.0 655.1 L1006.0 658.6"/>
<path d="M864.0 726.4 L866.0 722.6 L868.0 718.9 L870.0 715.1 L872.0 711.4 L874.0 707.7 L876.0 704.0 L878.0 700.3 L880.0 696.6 L882.0 693.0 L884.0 689.4 L886.0 685.8 L888.0 682.2 L890.0 678.6 L892.0 675.1 L894.0 671.5 L896.0 668.1 L898.0 664.6 L900.0 661.2 L902.0 657.8 L904.0 654.5 L906.0 651.2 L908.0 648.0 L910.0 644.8 L912.0 641.7 L914.0 638.7 L916.0 635.7 L918.0 632.9 L920.0 630.1 L922.0 627.4 L924.0 624.8 L926.0 622.4 L928.0 620.1 L930.0 618.0 L932.0 616.0 L934.0 614.2 L936.0 612.6 L938.0 611.2 L940.0 610.1 L942.0 609.2 L944.0 608.5 L946.0 608.1 L948.0 608.0 L950.0 608.1 L952.0 608.5 L954.0 609.2 L956.0 610.1 L958.0 611.2 L960.0 612.6 L962.0 614.2 L964.0 616.0 L966.0 618.0 L968.0 620.1 L970.0 622.4 L972.0 624.8 L974.0 627.4 L976.0 630.1 L978.0 632.9 L980.0 635.7 L982.0 638.7 L984.0 641.7 L986.0 644.8 L988.0 648.0 L990.0 651.2 L992.0 654.5 L994.0 657.8 L996.0 661.2 L998.0 664.6 L1000.0 668.1 L1002.0 671.5 L1004.0 675.1 L1006.0 678.6"/>
<path d="M864.0 746.4 L866.0 742.6 L868.0 738.9 L870.0 735.1 L872.0 731.4 L874.0 727.7 L876.0 724.0 L878.0 720.3 L880.0 716.6 L882.0 713.0 L884.0 709.4 L886.0 705.8 L888.0 702.2 L890.0 698.6 L892.0 695.1 L894.0 691.5 L896.0 688.1 L898.0 684.6 L900.0 681.2 L902.0 677.8 L904.0 674.5 L906.0 671.2 L908.0 668.0 L910.0 664.8 L912.0 661.7 L914.0 658.7 L916.0 655.7 L918.0 652.9 L920.0 650.1 L922.0 647.4 L924.0 644.8 L926.0 642.4 L928.0 640.1 L930.0 638.0 L932.0 636.0 L934.0 634.2 L936.0 632.6 L938.0 631.2 L940.0 630.1 L942.0 629.2 L944.0 628.5 L946.0 628.1 L948.0 628.0 L950.0 628.1 L952.0 628.5 L954.0 629.2 L956.0 630.1 L958.0 631.2 L960.0 632.6 L962.0 634.2 L964.0 636.0 L966.0 638.0 L968.0 640.1 L970.0 642.4 L972.0 644.8 L974.0 647.4 L976.0 650.1 L978.0 652.9 L980.0 655.7 L982.0 658.7 L984.0 661.7 L986.0 664.8 L988.0 668.0 L990.0 671.2 L992.0 674.5 L994.0 677.8 L996.0 681.2 L998.0 684.6 L1000.0 688.1 L1002.0 691.5 L1004.0 695.1 L1006.0 698.6"/>
<path d="M864.0 766.4 L866.0 762.6 L868.0 758.9 L870.0 755.1 L872.0 751.4 L874.0 747.7 L876.0 744.0 L878.0 740.3 L880.0 736.6 L882.0 733.0 L884.0 729.4 L886.0 725.8 L888.0 722.2 L890.0 718.6 L892.0 715.1 L894.0 711.5 L896.0 708.1 L898.0 704.6 L900.0 701.2 L902.0 697.8 L904.0 694.5 L906.0 691.2 L908.0 688.0 L910.0 684.8 L912.0 681.7 L914.0 678.7 L916.0 675.7 L918.0 672.9 L920.0 670.1 L922.0 667.4 L924.0 664.8 L926.0 662.4 L928.0 660.1 L930.0 658.0 L932.0 656.0 L934.0 654.2 L936.0 652.6 L938.0 651.2 L940.0 650.1 L942.0 649.2 L944.0 648.5 L946.0 648.1 L948.0 648.0 L950.0 648.1 L952.0 648.5 L954.0 649.2 L956.0 650.1 L958.0 651.2 L960.0 652.6 L962.0 654.2 L964.0 656.0 L966.0 658.0 L968.0 660.1 L970.0 662.4 L972.0 664.8 L974.0 667.4 L976.0 670.1 L978.0 672.9 L980.0 675.7 L982.0 678.7 L984.0 681.7 L986.0 684.8 L988.0 688.0 L990.0 691.2 L992.0 694.5 L994.0 697.8 L996.0 701.2 L998.0 704.6 L1000.0 708.1 L1002.0 711.5 L1004.0 715.1 L1006.0 718.6"/>
</g>
<path d="M866.0 805.6 L868.0 807.5 L870.0 809.3 L872.0 811.1 L874.0 812.8 L876.0 814.5 L878.0 816.0 L880.0 817.6 L882.0 819.1 L884.0 820.5 L886.0 821.9 L888.0 823.2 L890.0 824.4 L892.0 825.7 L894.0 826.8 L896.0 827.9 L898.0 828.9 L900.0 829.9 L902.0 830.8 L904.0 831.7 L906.0 832.5 L908.0 833.3 L910.0 834.0 L912.0 834.6 L914.0 835.2 L916.0 835.7 L918.0 836.2 L920.0 836.6 L922.0 837.0 L924.0 837.3 L926.0 837.6 L928.0 837.7 L930.0 837.9 L932.0 838.0 L934.0 838.0 L936.0 838.0 L938.0 837.9 L940.0 837.7 L942.0 837.6 L944.0 837.3 L946.0 837.0 L948.0 836.6 L950.0 836.2 L952.0 835.7 L954.0 835.2 L956.0 834.6 L958.0 834.0 L960.0 833.3 L962.0 832.5 L964.0 831.7 L966.0 830.8 L968.0 829.9 L970.0 828.9 L972.0 827.9 L974.0 826.8 L976.0 825.7 L978.0 824.4 L980.0 823.2 L982.0 821.9 L984.0 820.5 L986.0 819.1 L988.0 817.6 L990.0 816.0 L992.0 814.5 L994.0 812.8 L996.0 811.1 L998.0 809.3 L1000.0 807.5 L1002.0 805.6 L1004.0 803.7 L1004.0 849.0 L866.0 849.0 Z" fill="#7b7b7b" fill-opacity="0.3" shape-rendering="auto"/>
<ellipse cx="934" cy="846" rx="48" ry="7" fill="#545454" fill-opacity="0.6" shape-rendering="auto"/>
<path d="M893 671 L934 730 L975 671 Z" fill="#505050" fill-opacity="0.22" shape-rendering="auto"/>
<ellipse cx="894" cy="792" rx="24" ry="48" fill="url(#rg12)" shape-rendering="auto"/>
<ellipse cx="976" cy="792" rx="24" ry="48" fill="url(#rg13)" shape-rendering="auto"/>
<ellipse cx="934" cy="760" rx="60" ry="14" fill="url(#rg14)" shape-rendering="auto"/>
<g clip-path="url(#c7)" fill="none" stroke="#737373" stroke-width="2.5" stroke-opacity="0.6" shape-rendering="auto">
<path d="M864.0 720.2 L865.0 725.8 L866.0 731.3 L867.0 736.5 L868.0 741.6 L869.0 746.4 L870.0 751.1 L871.0 755.6 L872.0 759.9 L873.0 764.1 L874.0 768.1 L875.0 771.9 L876.0 775.6 L877.0 779.1 L878.0 782.4 L879.0 785.6 L880.0 788.7 L881.0 791.6 L882.0 794.4 L883.0 797.1 L884.0 799.6 L885.0 802.1 L886.0 804.4 L887.0 806.5 L888.0 808.6 L889.0 810.5 L890.0 812.4 L891.0 814.1 L892.0 815.8 L893.0 817.3 L894.0 818.8 L895.0 820.2 L896.0 821.5 L897.0 822.7 L898.0 823.8 L899.0 824.9 L900.0 825.8 L901.0 826.7 L902.0 827.6 L903.0 828.4 L904.0 829.1 L905.0 829.7 L906.0 830.4 L907.0 830.9 L908.0 831.4 L909.0 831.9 L910.0 832.3 L911.0 832.7 L912.0 833.0 L913.0 833.3 L914.0 833.6 L915.0 833.8 L916.0 834.0 L917.0 834.2 L918.0 834.3 L919.0 834.5 L920.0 834.6 L921.0 834.7 L922.0 834.8 L923.0 834.8 L924.0 834.9 L925.0 834.9 L926.0 834.9 L927.0 835.0 L928.0 835.0 L929.0 835.0 L930.0 835.0 L931.0 835.0 L932.0 835.0 L933.0 835.0 L934.0 835.0 L935.0 835.0 L936.0 835.0 L937.0 835.0 L938.0 835.0 L939.0 835.0 L940.0 835.0 L941.0 835.0 L942.0 834.9 L943.0 834.9 L944.0 834.9 L945.0 834.8 L946.0 834.8 L947.0 834.7 L948.0 834.6 L949.0 834.5 L950.0 834.3 L951.0 834.2 L952.0 834.0 L953.0 833.8 L954.0 833.6 L955.0 833.3 L956.0 833.0 L957.0 832.7 L958.0 832.3 L959.0 831.9 L960.0 831.4 L961.0 830.9 L962.0 830.4 L963.0 829.7 L964.0 829.1 L965.0 828.4 L966.0 827.6 L967.0 826.7 L968.0 825.8 L969.0 824.9 L970.0 823.8 L971.0 822.7 L972.0 821.5 L973.0 820.2 L974.0 818.8 L975.0 817.3 L976.0 815.8 L977.0 814.1 L978.0 812.4 L979.0 810.5 L980.0 808.6 L981.0 806.5 L982.0 804.4 L983.0 802.1 L984.0 799.6 L985.0 797.1 L986.0 794.4 L987.0 791.6 L988.0 788.7 L989.0 785.6 L990.0 782.4 L991.0 779.1 L992.0 775.6 L993.0 771.9 L994.0 768.1 L995.0 764.1 L996.0 759.9 L997.0 755.6 L998.0 751.1 L999.0 746.4 L1000.0 741.6 L1001.0 736.5 L1002.0 731.3 L1003.0 725.8 L1004.0 720.2 L1005.0 714.4 L1006.0 708.3"/>
<path d="M864.0 673.0 L865.0 677.2 L866.0 681.3 L867.0 685.3 L868.0 689.3 L869.0 693.2 L870.0 697.1 L871.0 700.9 L872.0 704.7 L873.0 708.4 L874.0 712.0 L875.0 715.6 L876.0 719.1 L877.0 722.5 L878.0 725.9 L879.0 729.2 L880.0 732.5 L881.0 735.7 L882.0 738.9 L883.0 742.0 L884.0 745.0 L885.0 748.0 L886.0 750.9 L887.0 753.7 L888.0 756.5 L889.0 759.2 L890.0 761.9 L891.0 764.5 L892.0 767.1 L893.0 769.6 L894.0 772.0 L895.0 774.4 L896.0 776.7 L897.0 778.9 L898.0 781.1 L899.0 783.2 L900.0 785.3 L901.0 787.3 L902.0 789.3 L903.0 791.2 L904.0 793.0 L905.0 794.8 L906.0 796.5 L907.0 798.1 L908.0 799.7 L909.0 801.2 L910.0 802.7 L911.0 804.1 L912.0 805.5 L913.0 806.8 L914.0 808.0 L915.0 809.2 L916.0 810.3 L917.0 811.3 L918.0 812.3 L919.0 813.2 L920.0 814.1 L921.0 814.9 L922.0 815.7 L923.0 816.4 L924.0 817.0 L925.0 817.6 L926.0 818.1 L927.0 818.5 L928.0 818.9 L929.0 819.2 L930.0 819.5 L931.0 819.7 L932.0 819.9 L933.0 820.0 L934.0 820.0 L935.0 820.0 L936.0 819.9 L937.0 819.7 L938.0 819.5 L939.0 819.2 L940.0 818.9 L941.0 818.5 L942.0 818.1 L943.0 817.6 L944.0 817.0 L945.0 816.4 L946.0 815.7 L947.0 814.9 L948.0 814.1 L949.0 813.2 L950.0 812.3 L951.0 811.3 L952.0 810.3 L953.0 809.2 L954.0 808.0 L955.0 806.8 L956.0 805.5 L957.0 804.1 L958.0 802.7 L959.0 801.2 L960.0 799.7 L961.0 798.1 L962.0 796.5 L963.0 794.8 L964.0 793.0 L965.0 791.2 L966.0 789.3 L967.0 787.3 L968.0 785.3 L969.0 783.2 L970.0 781.1 L971.0 778.9 L972.0 776.7 L973.0 774.4 L974.0 772.0 L975.0 769.6 L976.0 767.1 L977.0 764.5 L978.0 761.9 L979.0 759.2 L980.0 756.5 L981.0 753.7 L982.0 750.9 L983.0 748.0 L984.0 745.0 L985.0 742.0 L986.0 738.9 L987.0 735.7 L988.0 732.5 L989.0 729.2 L990.0 725.9 L991.0 722.5 L992.0 719.1 L993.0 715.6 L994.0 712.0 L995.0 708.4 L996.0 704.7 L997.0 700.9 L998.0 697.1 L999.0 693.2 L1000.0 689.3 L1001.0 685.3 L1002.0 681.3 L1003.0 677.2 L1004.0 673.0 L1005.0 668.8 L1006.0 664.5"/>
<path d="M864.0 599.7 L865.0 603.4 L866.0 607.1 L867.0 610.8 L868.0 614.4 L869.0 618.1 L870.0 621.7 L871.0 625.3 L872.0 628.9 L873.0 632.5 L874.0 636.1 L875.0 639.6 L876.0 643.1 L877.0 646.6 L878.0 650.1 L879.0 653.6 L880.0 657.0 L881.0 660.5 L882.0 663.9 L883.0 667.3 L884.0 670.7 L885.0 674.0 L886.0 677.3 L887.0 680.7 L888.0 683.9 L889.0 687.2 L890.0 690.5 L891.0 693.7 L892.0 696.9 L893.0 700.1 L894.0 703.2 L895.0 706.4 L896.0 709.5 L897.0 712.6 L898.0 715.6 L899.0 718.6 L900.0 721.7 L901.0 724.6 L902.0 727.6 L903.0 730.5 L904.0 733.4 L905.0 736.3 L906.0 739.1 L907.0 741.9 L908.0 744.7 L909.0 747.5 L910.0 750.2 L911.0 752.9 L912.0 755.5 L913.0 758.1 L914.0 760.7 L915.0 763.2 L916.0 765.7 L917.0 768.2 L918.0 770.6 L919.0 773.0 L920.0 775.3 L921.0 777.6 L922.0 779.8 L923.0 781.9 L924.0 784.0 L925.0 786.1 L926.0 788.1 L927.0 790.0 L928.0 791.8 L929.0 793.5 L930.0 795.1 L931.0 796.7 L932.0 798.0 L933.0 799.2 L934.0 800.0 L935.0 799.2 L936.0 798.0 L937.0 796.7 L938.0 795.1 L939.0 793.5 L940.0 791.8 L941.0 790.0 L942.0 788.1 L943.0 786.1 L944.0 784.0 L945.0 781.9 L946.0 779.8 L947.0 777.6 L948.0 775.3 L949.0 773.0 L950.0 770.6 L951.0 768.2 L952.0 765.7 L953.0 763.2 L954.0 760.7 L955.0 758.1 L956.0 755.5 L957.0 752.9 L958.0 750.2 L959.0 747.5 L960.0 744.7 L961.0 741.9 L962.0 739.1 L963.0 736.3 L964.0 733.4 L965.0 730.5 L966.0 727.6 L967.0 724.6 L968.0 721.7 L969.0 718.6 L970.0 715.6 L971.0 712.6 L972.0 709.5 L973.0 706.4 L974.0 703.2 L975.0 700.1 L976.0 696.9 L977.0 693.7 L978.0 690.5 L979.0 687.2 L980.0 683.9 L981.0 680.7 L982.0 677.3 L983.0 674.0 L984.0 670.7 L985.0 667.3 L986.0 663.9 L987.0 660.5 L988.0 657.0 L989.0 653.6 L990.0 650.1 L991.0 646.6 L992.0 643.1 L993.0 639.6 L994.0 636.1 L995.0 632.5 L996.0 628.9 L997.0 625.3 L998.0 621.7 L999.0 618.1 L1000.0 614.4 L1001.0 610.8 L1002.0 607.1 L1003.0 603.4 L1004.0 599.7 L1005.0 596.0 L1006.0 592.2"/>
<path d="M864.0 535.1 L865.0 539.5 L866.0 543.9 L867.0 548.3 L868.0 552.6 L869.0 557.0 L870.0 561.3 L871.0 565.6 L872.0 569.8 L873.0 574.1 L874.0 578.3 L875.0 582.5 L876.0 586.7 L877.0 590.9 L878.0 595.0 L879.0 599.1 L880.0 603.2 L881.0 607.3 L882.0 611.4 L883.0 615.4 L884.0 619.4 L885.0 623.4 L886.0 627.3 L887.0 631.3 L888.0 635.2 L889.0 639.1 L890.0 642.9 L891.0 646.7 L892.0 650.6 L893.0 654.3 L894.0 658.1 L895.0 661.8 L896.0 665.5 L897.0 669.2 L898.0 672.8 L899.0 676.4 L900.0 680.0 L901.0 683.5 L902.0 687.0 L903.0 690.5 L904.0 693.9 L905.0 697.3 L906.0 700.7 L907.0 704.1 L908.0 707.4 L909.0 710.6 L910.0 713.8 L911.0 717.0 L912.0 720.2 L913.0 723.3 L914.0 726.3 L915.0 729.3 L916.0 732.3 L917.0 735.2 L918.0 738.1 L919.0 740.9 L920.0 743.6 L921.0 746.3 L922.0 749.0 L923.0 751.5 L924.0 754.0 L925.0 756.5 L926.0 758.8 L927.0 761.1 L928.0 763.2 L929.0 765.3 L930.0 767.2 L931.0 769.0 L932.0 770.7 L933.0 772.0 L934.0 773.0 L935.0 772.0 L936.0 770.7 L937.0 769.0 L938.0 767.2 L939.0 765.3 L940.0 763.2 L941.0 761.1 L942.0 758.8 L943.0 756.5 L944.0 754.0 L945.0 751.5 L946.0 749.0 L947.0 746.3 L948.0 743.6 L949.0 740.9 L950.0 738.1 L951.0 735.2 L952.0 732.3 L953.0 729.3 L954.0 726.3 L955.0 723.3 L956.0 720.2 L957.0 717.0 L958.0 713.8 L959.0 710.6 L960.0 707.4 L961.0 704.1 L962.0 700.7 L963.0 697.3 L964.0 693.9 L965.0 690.5 L966.0 687.0 L967.0 683.5 L968.0 680.0 L969.0 676.4 L970.0 672.8 L971.0 669.2 L972.0 665.5 L973.0 661.8 L974.0 658.1 L975.0 654.3 L976.0 650.6 L977.0 646.7 L978.0 642.9 L979.0 639.1 L980.0 635.2 L981.0 631.3 L982.0 627.3 L983.0 623.4 L984.0 619.4 L985.0 615.4 L986.0 611.4 L987.0 607.3 L988.0 603.2 L989.0 599.1 L990.0 595.0 L991.0 590.9 L992.0 586.7 L993.0 582.5 L994.0 578.3 L995.0 574.1 L996.0 569.8 L997.0 565.6 L998.0 561.3 L999.0 557.0 L1000.0 552.6 L1001.0 548.3 L1002.0 543.9 L1003.0 539.5 L1004.0 535.1 L1005.0 530.7 L1006.0 526.3"/>
<path d="M864.0 456.6 L865.0 461.7 L866.0 466.8 L867.0 471.8 L868.0 476.8 L869.0 481.9 L870.0 486.9 L871.0 491.8 L872.0 496.8 L873.0 501.7 L874.0 506.6 L875.0 511.5 L876.0 516.3 L877.0 521.1 L878.0 525.9 L879.0 530.7 L880.0 535.4 L881.0 540.2 L882.0 544.8 L883.0 549.5 L884.0 554.2 L885.0 558.8 L886.0 563.3 L887.0 567.9 L888.0 572.4 L889.0 576.9 L890.0 581.4 L891.0 585.8 L892.0 590.2 L893.0 594.6 L894.0 598.9 L895.0 603.2 L896.0 607.5 L897.0 611.8 L898.0 616.0 L899.0 620.1 L900.0 624.3 L901.0 628.4 L902.0 632.4 L903.0 636.5 L904.0 640.5 L905.0 644.4 L906.0 648.3 L907.0 652.2 L908.0 656.0 L909.0 659.8 L910.0 663.5 L911.0 667.2 L912.0 670.8 L913.0 674.4 L914.0 678.0 L915.0 681.4 L916.0 684.9 L917.0 688.3 L918.0 691.6 L919.0 694.8 L920.0 698.0 L921.0 701.1 L922.0 704.2 L923.0 707.2 L924.0 710.1 L925.0 712.9 L926.0 715.6 L927.0 718.2 L928.0 720.7 L929.0 723.1 L930.0 725.3 L931.0 727.4 L932.0 729.3 L933.0 730.9 L934.0 732.0 L935.0 730.9 L936.0 729.3 L937.0 727.4 L938.0 725.3 L939.0 723.1 L940.0 720.7 L941.0 718.2 L942.0 715.6 L943.0 712.9 L944.0 710.1 L945.0 707.2 L946.0 704.2 L947.0 701.1 L948.0 698.0 L949.0 694.8 L950.0 691.6 L951.0 688.3 L952.0 684.9 L953.0 681.4 L954.0 678.0 L955.0 674.4 L956.0 670.8 L957.0 667.2 L958.0 663.5 L959.0 659.8 L960.0 656.0 L961.0 652.2 L962.0 648.3 L963.0 644.4 L964.0 640.5 L965.0 636.5 L966.0 632.4 L967.0 628.4 L968.0 624.3 L969.0 620.1 L970.0 616.0 L971.0 611.8 L972.0 607.5 L973.0 603.2 L974.0 598.9 L975.0 594.6 L976.0 590.2 L977.0 585.8 L978.0 581.4 L979.0 576.9 L980.0 572.4 L981.0 567.9 L982.0 563.3 L983.0 558.8 L984.0 554.2 L985.0 549.5 L986.0 544.8 L987.0 540.2 L988.0 535.4 L989.0 530.7 L990.0 525.9 L991.0 521.1 L992.0 516.3 L993.0 511.5 L994.0 506.6 L995.0 501.7 L996.0 496.8 L997.0 491.8 L998.0 486.9 L999.0 481.9 L1000.0 476.8 L1001.0 471.8 L1002.0 466.8 L1003.0 461.7 L1004.0 456.6 L1005.0 451.4 L1006.0 446.3"/>
</g>
<rect x="1169" y="552" width="20" height="297" fill="url(#g15)"/>
<path d="M1169 566 L1172 548 L1177 560 L1182 546 L1186 556 L1189 550 L1189 566 Z" fill="#3e3e3e" shape-rendering="auto"/>
<rect x="1169" y="552" width="1" height="297" fill="#505050"/>
<rect x="1181" y="630" width="8" height="75" fill="url(#g16)"/>
<path d="M1184 575 L1177 710" stroke="#505050" stroke-width="2" stroke-opacity="0.6" shape-rendering="auto"/>
<rect x="590" y="549" width="12" height="300" fill="url(#g17)"/>
<path d="M1063 549 L1075 549 L1077 849 L1063 849 Z" fill="url(#g18)"/>
<rect x="64" y="551" width="5" height="298" fill="url(#g20)"/>
<rect x="678" y="556" width="11" height="293" fill="url(#g21)"/>
<rect x="866" y="556" width="11" height="293" fill="url(#g21)"/>
<rect x="948" y="577" width="2" height="272" fill="url(#g22)"/>
<rect x="140" y="560" width="1" height="289" fill="#585858"/>
</g>
<rect x="1200" y="32" width="10" height="818" fill="url(#cbar)"/>
<rect x="1210" y="32" width="4" height="1" fill="#fff"/>
<rect x="1210" y="113" width="4" height="1" fill="#fff"/>
<rect x="1210" y="195" width="4" height="1" fill="#fff"/>
<rect x="1210" y="277" width="4" height="1" fill="#fff"/>
<rect x="1210" y="359" width="4" height="1" fill="#fff"/>
<rect x="1210" y="441" width="4" height="1" fill="#fff"/>
<rect x="1210" y="522" width="4" height="1" fill="#fff"/>
<rect x="1210" y="604" width="4" height="1" fill="#fff"/>
<rect x="1210" y="686" width="4" height="1" fill="#fff"/>
<rect x="1210" y="768" width="4" height="1" fill="#fff"/>
<rect x="1210" y="850" width="4" height="1" fill="#fff"/>
<g shape-rendering="auto"><text x="60" y="19" fill="#fff" font-family="Liberation Sans, sans-serif" font-size="11" textLength="351" lengthAdjust="spacing">FLAC (Free Lossless Audio Codec), 96000 Гц, 24 біта, 2 каналу</text>
<text x="50.5" y="36" text-anchor="end" fill="#fff" font-family="Liberation Sans, sans-serif" font-size="11">48 кГц</text>
<text x="50.5" y="87" text-anchor="end" fill="#fff" font-family="Liberation Sans, sans-serif" font-size="11">45 кГц</text>
<text x="50.5" y="172" text-anchor="end" fill="#fff" font-family="Liberation Sans, sans-serif" font-size="11">40 кГц</text>
<text x="50.5" y="257" text-anchor="end" fill="#fff" font-family="Liberation Sans, sans-serif" font-size="11">35 кГц</text>
<text x="50.5" y="342" text-anchor="end" fill="#fff" font-family="Liberation Sans, sans-serif" font-size="11">30 кГц</text>
<text x="50.5" y="427" text-anchor="end" fill="#fff" font-family="Liberation Sans, sans-serif" font-size="11">25 кГц</text>
<text x="50.5" y="513" text-anchor="end" fill="#fff" font-family="Liberation Sans, sans-serif" font-size="11">20 кГц</text>
<text x="50.5" y="598" text-anchor="end" fill="#fff" font-family="Liberation Sans, sans-serif" font-size="11">15 кГц</text>
<text x="50.5" y="683" text-anchor="end" fill="#fff" font-family="Liberation Sans, sans-serif" font-size="11">10 кГц</text>
<text x="50.5" y="768" text-anchor="end" fill="#fff" font-family="Liberation Sans, sans-serif" font-size="11">5 кГц</text>
<text x="50.5" y="853" text-anchor="end" fill="#fff" font-family="Liberation Sans, sans-serif" font-size="11">0 кГц</text>
<text x="60.5" y="871" text-anchor="middle" fill="#fff" font-family="Liberation Sans, sans-serif" font-size="11">0:00</text>
<text x="173.5" y="871" text-anchor="middle" fill="#fff" font-family="Liberation Sans, sans-serif" font-size="11">0:01</text>
<text x="287.5" y="871" text-anchor="middle" fill="#fff" font-family="Liberation Sans, sans-serif" font-size="11">0:02</text>
<text x="401.5" y="871" text-anchor="middle" fill="#fff" font-family="Liberation Sans, sans-serif" font-size="11">0:03</text>
<text x="515.5" y="871" text-anchor="middle" fill="#fff" font-family="Liberation Sans, sans-serif" font-size="11">0:04</text>
<text x="629.5" y="871" text-anchor="middle" fill="#fff" font-family="Liberation Sans, sans-serif" font-size="11">0:05</text>
<text x="743.5" y="871" text-anchor="middle" fill="#fff" font-family="Liberation Sans, sans-serif" font-size="11">0:06</text>
<text x="857.5" y="871" text-anchor="middle" fill="#fff" font-family="Liberation Sans, sans-serif" font-size="11">0:07</text>
<text x="971.5" y="871" text-anchor="middle" fill="#fff" font-family="Liberation Sans, sans-serif" font-size="11">0:08</text>
<text x="1085.5" y="871" text-anchor="middle" fill="#fff" font-family="Liberation Sans, sans-serif" font-size="11">0:09</text>
<text x="1220" y="36" fill="#fff" font-family="Liberation Sans, sans-serif" font-size="11">-20 дБ</text>
<text x="1220" y="117" fill="#fff" font-family="Liberation Sans, sans-serif" font-size="11">-30 дБ</text>
<text x="1220" y="199" fill="#fff" font-family="Liberation Sans, sans-serif" font-size="11">-40 дБ</text>
<text x="1220" y="281" fill="#fff" font-family="Liberation Sans, sans-serif" font-size="11">-50 дБ</text>
<text x="1220" y="363" fill="#fff" font-family="Liberation Sans, sans-serif" font-size="11">-60 дБ</text>
<text x="1220" y="445" fill="#fff" font-family="Liberation Sans, sans-serif" font-size="11">-70 дБ</text>
<text x="1220" y="526" fill="#fff" font-family="Liberation Sans, sans-serif" font-size="11">-80 дБ</text>
<text x="1220" y="608" fill="#fff" font-family="Liberation Sans, sans-serif" font-size="11">-90 дБ</text>
<text x="1220" y="690" fill="#fff" font-family="Liberation Sans, sans-serif" font-size="11">-100 дБ</text>
<text x="1220" y="772" fill="#fff" font-family="Liberation Sans, sans-serif" font-size="11">-110 дБ</text>
<text x="1220" y="854" fill="#fff" font-family="Liberation Sans, sans-serif" font-size="11">-120 дБ</text></g>
<rect x="60.5" y="32.5" width="1129" height="817" fill="none" stroke="#fff" stroke-width="1"/>
<rect x="57" y="32" width="3" height="1" fill="#fff"/>
<rect x="57" y="83" width="3" height="1" fill="#fff"/>
<rect x="57" y="168" width="3" height="1" fill="#fff"/>
<rect x="57" y="253" width="3" height="1" fill="#fff"/>
<rect x="57" y="338" width="3" height="1" fill="#fff"/>
<rect x="57" y="423" width="3" height="1" fill="#fff"/>
<rect x="57" y="509" width="3" height="1" fill="#fff"/>
<rect x="57" y="594" width="3" height="1" fill="#fff"/>
<rect x="57" y="679" width="3" height="1" fill="#fff"/>
<rect x="57" y="764" width="3" height="1" fill="#fff"/>
<rect x="57" y="849" width="3" height="1" fill="#fff"/>
<rect x="60" y="850" width="1" height="4" fill="#fff"/>
<rect x="173" y="850" width="1" height="4" fill="#fff"/>
<rect x="287" y="850" width="1" height="4" fill="#fff"/>
<rect x="401" y="850" width="1" height="4" fill="#fff"/>
<rect x="515" y="850" width="1" height="4" fill="#fff"/>
<rect x="629" y="850" width="1" height="4" fill="#fff"/>
<rect x="743" y="850" width="1" height="4" fill="#fff"/>
<rect x="857" y="850" width="1" height="4" fill="#fff"/>
<rect x="971" y="850" width="1" height="4" fill="#fff"/>
<rect x="1085" y="850" width="1" height="4" fill="#fff"/>
</svg></body></html>
